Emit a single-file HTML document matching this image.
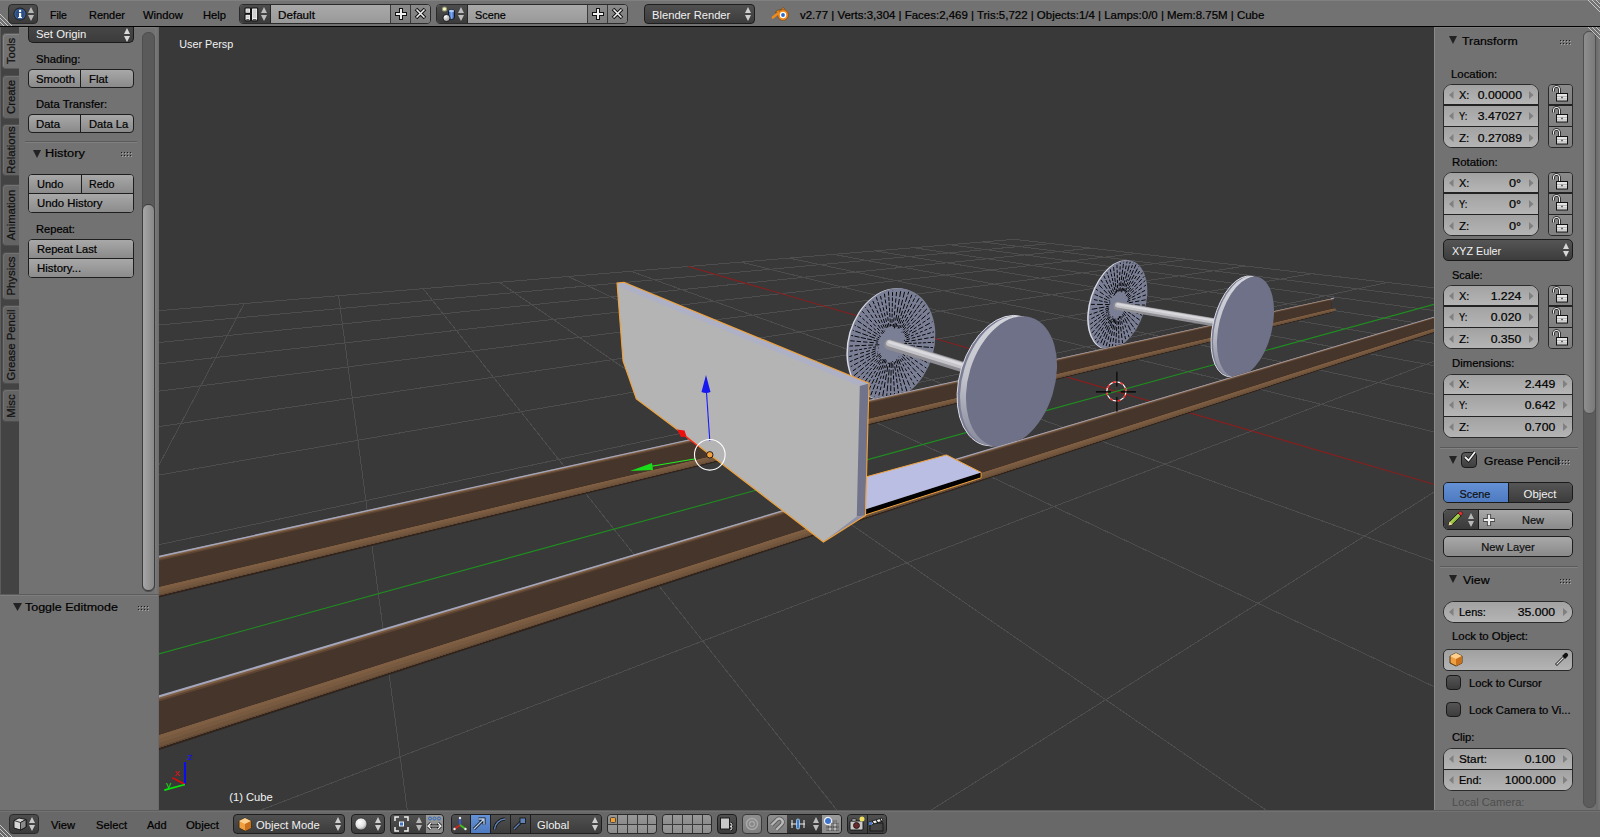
<!DOCTYPE html>
<html><head><meta charset="utf-8"><style>
html,body{margin:0;padding:0;width:1600px;height:837px;overflow:hidden;background:#393939;}
body{position:relative;font-family:"Liberation Sans", sans-serif;}
body>div,body>svg{position:absolute;}
</style></head><body>
<svg style="left:0;top:0;width:1600px;height:837px" viewBox="0 0 1600 837"><defs><linearGradient id="railband" x1="0" y1="0" x2="0" y2="1"><stop offset="0" stop-color="#7a5a3e"/><stop offset="1" stop-color="#7a5a3e"/></linearGradient><linearGradient id="rimgrad" x1="0" y1="0" x2="0" y2="1"><stop offset="0" stop-color="#d6d7de"/><stop offset="0.55" stop-color="#c4c5cc"/><stop offset="1" stop-color="#8a8c9e"/></linearGradient><clipPath id="vpclip"><rect x="159" y="27" width="1275" height="783"/></clipPath></defs><g clip-path="url(#vpclip)"><rect x="159" y="27" width="1275" height="783" fill="#393939"/><line x1="1014.3" y1="239.3" x2="154.0" y2="311.1" stroke="#4d4d4d" stroke-width="1.0" shape-rendering="crispEdges"/><line x1="1050.8" y1="243.6" x2="154.0" y2="325.5" stroke="#4d4d4d" stroke-width="1.0" shape-rendering="crispEdges"/><line x1="1091.4" y1="248.2" x2="154.0" y2="343.0" stroke="#4d4d4d" stroke-width="1.0" shape-rendering="crispEdges"/><line x1="1136.7" y1="253.5" x2="154.0" y2="364.5" stroke="#4d4d4d" stroke-width="1.0" shape-rendering="crispEdges"/><line x1="1187.6" y1="259.4" x2="154.0" y2="391.8" stroke="#4d4d4d" stroke-width="1.0" shape-rendering="crispEdges"/><line x1="1245.4" y1="266.1" x2="154.0" y2="427.4" stroke="#4d4d4d" stroke-width="1.0" shape-rendering="crispEdges"/><line x1="1311.3" y1="273.7" x2="154.0" y2="475.9" stroke="#4d4d4d" stroke-width="1.0" shape-rendering="crispEdges"/><line x1="1387.5" y1="282.5" x2="154.0" y2="545.8" stroke="#4d4d4d" stroke-width="1.0" shape-rendering="crispEdges"/><line x1="1439.0" y1="359.3" x2="247.9" y2="815.0" stroke="#4d4d4d" stroke-width="1.0" shape-rendering="crispEdges"/><line x1="1439.0" y1="488.9" x2="923.4" y2="815.0" stroke="#4d4d4d" stroke-width="1.0" shape-rendering="crispEdges"/><line x1="1014.3" y1="239.3" x2="1439.0" y2="288.4" stroke="#4d4d4d" stroke-width="1.0" shape-rendering="crispEdges"/><line x1="983.0" y1="242.0" x2="1439.0" y2="299.0" stroke="#4d4d4d" stroke-width="1.0" shape-rendering="crispEdges"/><line x1="949.6" y1="244.7" x2="1439.0" y2="311.3" stroke="#4d4d4d" stroke-width="1.0" shape-rendering="crispEdges"/><line x1="913.8" y1="247.7" x2="1439.0" y2="326.2" stroke="#4d4d4d" stroke-width="1.0" shape-rendering="crispEdges"/><line x1="875.3" y1="250.9" x2="1439.0" y2="344.2" stroke="#4d4d4d" stroke-width="1.0" shape-rendering="crispEdges"/><line x1="833.9" y1="254.4" x2="1439.0" y2="366.6" stroke="#4d4d4d" stroke-width="1.0" shape-rendering="crispEdges"/><line x1="789.2" y1="258.1" x2="1439.0" y2="395.3" stroke="#4d4d4d" stroke-width="1.0" shape-rendering="crispEdges"/><line x1="740.8" y1="262.1" x2="1439.0" y2="433.2" stroke="#4d4d4d" stroke-width="1.0" shape-rendering="crispEdges"/><line x1="631.0" y1="271.3" x2="1439.0" y2="563.1" stroke="#4d4d4d" stroke-width="1.0" shape-rendering="crispEdges"/><line x1="568.2" y1="276.5" x2="1439.0" y2="689.0" stroke="#4d4d4d" stroke-width="1.0" shape-rendering="crispEdges"/><line x1="499.3" y1="282.3" x2="1273.2" y2="815.0" stroke="#4d4d4d" stroke-width="1.0" shape-rendering="crispEdges"/><line x1="423.1" y1="288.6" x2="840.8" y2="815.0" stroke="#4d4d4d" stroke-width="1.0" shape-rendering="crispEdges"/><line x1="338.6" y1="295.7" x2="407.9" y2="815.0" stroke="#4d4d4d" stroke-width="1.0" shape-rendering="crispEdges"/><line x1="244.2" y1="303.5" x2="154.0" y2="474.5" stroke="#4d4d4d" stroke-width="1.0" shape-rendering="crispEdges"/><line x1="688.3" y1="266.5" x2="1439.0" y2="485.7" stroke="#8a1e1e" stroke-width="1.1" /><line x1="1439.0" y1="303.0" x2="154.0" y2="655.2" stroke="#1f8f1f" stroke-width="1.1" /><ellipse cx="890.1" cy="344.2" rx="42.5" ry="57" transform="rotate(16 890.1 344.2)" fill="#d8dae4"/><ellipse cx="891.6" cy="344.2" rx="42.5" ry="57" transform="rotate(16 891.6 344.2)" fill="#7b7f95"/><g transform="translate(891.6,344.2) rotate(16)"><line x1="12.5" y1="0.8" x2="41.2" y2="2.7" stroke="#000" stroke-width="0.85" stroke-dasharray="4.6 1.7" stroke-dashoffset="3.8"/><line x1="13.3" y1="2.7" x2="40.8" y2="8.1" stroke="#000" stroke-width="0.85" stroke-dasharray="3.2 1.3" stroke-dashoffset="3.8"/><line x1="12.2" y1="4.1" x2="40.0" y2="13.4" stroke="#000" stroke-width="0.85" stroke-dasharray="3.7 2.3" stroke-dashoffset="2.8"/><line x1="13.2" y1="6.3" x2="38.8" y2="18.6" stroke="#000" stroke-width="0.85" stroke-dasharray="4.4 1.9" stroke-dashoffset="1.0"/><line x1="12.2" y1="7.8" x2="37.3" y2="23.6" stroke="#000" stroke-width="0.85" stroke-dasharray="5.6 1.8" stroke-dashoffset="5.5"/><line x1="11.7" y1="9.4" x2="35.4" y2="28.4" stroke="#000" stroke-width="0.85" stroke-dasharray="3.2 2.1" stroke-dashoffset="3.1"/><line x1="10.2" y1="10.1" x2="33.1" y2="32.9" stroke="#000" stroke-width="0.85" stroke-dasharray="3.1 2.2" stroke-dashoffset="2.5"/><line x1="10.2" y1="12.4" x2="30.5" y2="37.1" stroke="#000" stroke-width="0.85" stroke-dasharray="5.6 2.0" stroke-dashoffset="7.0"/><line x1="8.7" y1="12.8" x2="27.7" y2="41.0" stroke="#000" stroke-width="0.85" stroke-dasharray="5.4 1.7" stroke-dashoffset="6.7"/><line x1="8.4" y1="15.2" x2="24.6" y2="44.4" stroke="#000" stroke-width="0.85" stroke-dasharray="3.3 1.4" stroke-dashoffset="1.0"/><line x1="7.4" y1="16.5" x2="21.2" y2="47.4" stroke="#000" stroke-width="0.85" stroke-dasharray="4.3 1.9" stroke-dashoffset="1.9"/><line x1="5.6" y1="16.0" x2="17.6" y2="50.0" stroke="#000" stroke-width="0.85" stroke-dasharray="4.2 1.7" stroke-dashoffset="3.4"/><line x1="4.5" y1="16.9" x2="13.9" y2="52.1" stroke="#000" stroke-width="0.85" stroke-dasharray="5.7 2.0" stroke-dashoffset="7.1"/><line x1="3.4" y1="18.3" x2="10.0" y2="53.6" stroke="#000" stroke-width="0.85" stroke-dasharray="6.0 2.0" stroke-dashoffset="1.3"/><line x1="2.1" y1="18.7" x2="6.0" y2="54.7" stroke="#000" stroke-width="0.85" stroke-dasharray="5.9 2.2" stroke-dashoffset="4.6"/><line x1="0.7" y1="18.4" x2="2.0" y2="55.2" stroke="#000" stroke-width="0.85" stroke-dasharray="3.6 2.1" stroke-dashoffset="3.3"/><line x1="-0.6" y1="16.9" x2="-2.0" y2="55.2" stroke="#000" stroke-width="0.85" stroke-dasharray="3.2 2.2" stroke-dashoffset="5.3"/><line x1="-1.8" y1="16.1" x2="-6.0" y2="54.7" stroke="#000" stroke-width="0.85" stroke-dasharray="5.4 1.7" stroke-dashoffset="1.1"/><line x1="-3.1" y1="16.5" x2="-10.0" y2="53.6" stroke="#000" stroke-width="0.85" stroke-dasharray="5.3 2.2" stroke-dashoffset="0.3"/><line x1="-4.5" y1="17.0" x2="-13.9" y2="52.1" stroke="#000" stroke-width="0.85" stroke-dasharray="3.1 2.0" stroke-dashoffset="1.7"/><line x1="-6.0" y1="17.2" x2="-17.6" y2="50.0" stroke="#000" stroke-width="0.85" stroke-dasharray="5.9 1.8" stroke-dashoffset="7.7"/><line x1="-6.5" y1="14.6" x2="-21.2" y2="47.4" stroke="#000" stroke-width="0.85" stroke-dasharray="3.2 1.9" stroke-dashoffset="0.2"/><line x1="-7.4" y1="13.4" x2="-24.6" y2="44.4" stroke="#000" stroke-width="0.85" stroke-dasharray="4.2 1.9" stroke-dashoffset="1.0"/><line x1="-8.1" y1="11.9" x2="-27.7" y2="41.0" stroke="#000" stroke-width="0.85" stroke-dasharray="5.6 1.6" stroke-dashoffset="6.9"/><line x1="-10.5" y1="12.8" x2="-30.5" y2="37.1" stroke="#000" stroke-width="0.85" stroke-dasharray="4.1 1.8" stroke-dashoffset="3.1"/><line x1="-10.9" y1="10.8" x2="-33.1" y2="32.9" stroke="#000" stroke-width="0.85" stroke-dasharray="4.8 1.9" stroke-dashoffset="4.1"/><line x1="-12.3" y1="9.9" x2="-35.4" y2="28.4" stroke="#000" stroke-width="0.85" stroke-dasharray="4.5 1.7" stroke-dashoffset="4.5"/><line x1="-11.3" y1="7.2" x2="-37.3" y2="23.6" stroke="#000" stroke-width="0.85" stroke-dasharray="3.9 2.3" stroke-dashoffset="3.2"/><line x1="-12.5" y1="6.0" x2="-38.8" y2="18.6" stroke="#000" stroke-width="0.85" stroke-dasharray="3.0 1.7" stroke-dashoffset="2.8"/><line x1="-11.6" y1="3.9" x2="-40.0" y2="13.4" stroke="#000" stroke-width="0.85" stroke-dasharray="4.8 1.9" stroke-dashoffset="0.4"/><line x1="-13.4" y1="2.7" x2="-40.8" y2="8.1" stroke="#000" stroke-width="0.85" stroke-dasharray="4.4 2.0" stroke-dashoffset="2.2"/><line x1="-13.7" y1="0.9" x2="-41.2" y2="2.7" stroke="#000" stroke-width="0.85" stroke-dasharray="5.2 1.3" stroke-dashoffset="0.4"/><line x1="-13.6" y1="-0.9" x2="-41.2" y2="-2.7" stroke="#000" stroke-width="0.85" stroke-dasharray="5.9 1.6" stroke-dashoffset="3.4"/><line x1="-13.3" y1="-2.6" x2="-40.8" y2="-8.1" stroke="#000" stroke-width="0.85" stroke-dasharray="4.0 1.7" stroke-dashoffset="1.8"/><line x1="-12.5" y1="-4.2" x2="-40.0" y2="-13.4" stroke="#000" stroke-width="0.85" stroke-dasharray="4.8 1.6" stroke-dashoffset="2.4"/><line x1="-13.1" y1="-6.3" x2="-38.8" y2="-18.6" stroke="#000" stroke-width="0.85" stroke-dasharray="3.1 1.9" stroke-dashoffset="3.6"/><line x1="-11.5" y1="-7.3" x2="-37.3" y2="-23.6" stroke="#000" stroke-width="0.85" stroke-dasharray="3.7 2.1" stroke-dashoffset="1.4"/><line x1="-10.6" y1="-8.5" x2="-35.4" y2="-28.4" stroke="#000" stroke-width="0.85" stroke-dasharray="4.3 2.0" stroke-dashoffset="0.6"/><line x1="-10.2" y1="-10.2" x2="-33.1" y2="-32.9" stroke="#000" stroke-width="0.85" stroke-dasharray="4.0 2.1" stroke-dashoffset="2.7"/><line x1="-10.4" y1="-12.7" x2="-30.5" y2="-37.1" stroke="#000" stroke-width="0.85" stroke-dasharray="3.5 1.6" stroke-dashoffset="3.3"/><line x1="-9.5" y1="-14.1" x2="-27.7" y2="-41.0" stroke="#000" stroke-width="0.85" stroke-dasharray="4.4 1.5" stroke-dashoffset="0.7"/><line x1="-7.9" y1="-14.3" x2="-24.6" y2="-44.4" stroke="#000" stroke-width="0.85" stroke-dasharray="3.6 2.1" stroke-dashoffset="4.8"/><line x1="-6.4" y1="-14.2" x2="-21.2" y2="-47.4" stroke="#000" stroke-width="0.85" stroke-dasharray="3.8 2.1" stroke-dashoffset="3.8"/><line x1="-6.0" y1="-16.9" x2="-17.6" y2="-50.0" stroke="#000" stroke-width="0.85" stroke-dasharray="4.0 1.4" stroke-dashoffset="1.6"/><line x1="-4.7" y1="-17.6" x2="-13.9" y2="-52.1" stroke="#000" stroke-width="0.85" stroke-dasharray="3.8 1.6" stroke-dashoffset="2.3"/><line x1="-3.2" y1="-16.9" x2="-10.0" y2="-53.6" stroke="#000" stroke-width="0.85" stroke-dasharray="4.2 2.2" stroke-dashoffset="1.0"/><line x1="-1.7" y1="-15.8" x2="-6.0" y2="-54.7" stroke="#000" stroke-width="0.85" stroke-dasharray="5.8 2.2" stroke-dashoffset="7.9"/><line x1="-0.6" y1="-17.4" x2="-2.0" y2="-55.2" stroke="#000" stroke-width="0.85" stroke-dasharray="5.9 2.2" stroke-dashoffset="1.8"/><line x1="0.7" y1="-18.5" x2="2.0" y2="-55.2" stroke="#000" stroke-width="0.85" stroke-dasharray="5.5 2.0" stroke-dashoffset="3.9"/><line x1="1.9" y1="-16.8" x2="6.0" y2="-54.7" stroke="#000" stroke-width="0.85" stroke-dasharray="4.0 1.5" stroke-dashoffset="0.4"/><line x1="3.3" y1="-17.4" x2="10.0" y2="-53.6" stroke="#000" stroke-width="0.85" stroke-dasharray="3.9 2.1" stroke-dashoffset="0.3"/><line x1="4.8" y1="-17.9" x2="13.9" y2="-52.1" stroke="#000" stroke-width="0.85" stroke-dasharray="5.1 2.2" stroke-dashoffset="6.5"/><line x1="6.1" y1="-17.2" x2="17.6" y2="-50.0" stroke="#000" stroke-width="0.85" stroke-dasharray="4.7 1.3" stroke-dashoffset="4.5"/><line x1="6.3" y1="-14.2" x2="21.2" y2="-47.4" stroke="#000" stroke-width="0.85" stroke-dasharray="3.9 2.0" stroke-dashoffset="3.1"/><line x1="7.7" y1="-14.0" x2="24.6" y2="-44.4" stroke="#000" stroke-width="0.85" stroke-dasharray="5.8 1.9" stroke-dashoffset="2.6"/><line x1="8.4" y1="-12.5" x2="27.7" y2="-41.0" stroke="#000" stroke-width="0.85" stroke-dasharray="5.6 1.8" stroke-dashoffset="5.8"/><line x1="9.5" y1="-11.5" x2="30.5" y2="-37.1" stroke="#000" stroke-width="0.85" stroke-dasharray="3.6 1.8" stroke-dashoffset="4.4"/><line x1="9.9" y1="-9.9" x2="33.1" y2="-32.9" stroke="#000" stroke-width="0.85" stroke-dasharray="5.4 2.2" stroke-dashoffset="6.1"/><line x1="12.0" y1="-9.7" x2="35.4" y2="-28.4" stroke="#000" stroke-width="0.85" stroke-dasharray="3.0 1.9" stroke-dashoffset="4.3"/><line x1="10.9" y1="-6.9" x2="37.3" y2="-23.6" stroke="#000" stroke-width="0.85" stroke-dasharray="3.8 1.6" stroke-dashoffset="2.8"/><line x1="12.2" y1="-5.9" x2="38.8" y2="-18.6" stroke="#000" stroke-width="0.85" stroke-dasharray="4.4 2.1" stroke-dashoffset="0.0"/><line x1="11.7" y1="-3.9" x2="40.0" y2="-13.4" stroke="#000" stroke-width="0.85" stroke-dasharray="3.4 1.4" stroke-dashoffset="0.3"/><line x1="14.2" y1="-2.8" x2="40.8" y2="-8.1" stroke="#000" stroke-width="0.85" stroke-dasharray="5.6 1.4" stroke-dashoffset="3.5"/><line x1="12.7" y1="-0.8" x2="41.2" y2="-2.7" stroke="#000" stroke-width="0.85" stroke-dasharray="3.9 1.7" stroke-dashoffset="3.6"/></g><ellipse cx="891.6" cy="344.2" rx="10.2" ry="13.68" transform="rotate(16 891.6 344.2)" fill="#7b7f95"/><ellipse cx="1116.5" cy="304.7" rx="27" ry="46" transform="rotate(18 1116.5 304.7)" fill="#d8dae4"/><ellipse cx="1118" cy="304.7" rx="27" ry="46" transform="rotate(18 1118 304.7)" fill="#7b7f95"/><g transform="translate(1118,304.7) rotate(18)"><line x1="8.1" y1="0.8" x2="26.1" y2="2.7" stroke="#000" stroke-width="0.85" stroke-dasharray="3.5 2.0" stroke-dashoffset="0.4"/><line x1="8.3" y1="2.6" x2="25.8" y2="8.0" stroke="#000" stroke-width="0.85" stroke-dasharray="4.1 1.4" stroke-dashoffset="2.8"/><line x1="7.3" y1="3.9" x2="25.0" y2="13.3" stroke="#000" stroke-width="0.85" stroke-dasharray="4.3 1.4" stroke-dashoffset="0.5"/><line x1="7.5" y1="5.8" x2="23.9" y2="18.3" stroke="#000" stroke-width="0.85" stroke-dasharray="5.5 1.4" stroke-dashoffset="1.5"/><line x1="7.3" y1="7.6" x2="22.4" y2="23.1" stroke="#000" stroke-width="0.85" stroke-dasharray="5.8 1.9" stroke-dashoffset="3.1"/><line x1="7.2" y1="9.6" x2="20.6" y2="27.5" stroke="#000" stroke-width="0.85" stroke-dasharray="3.1 2.2" stroke-dashoffset="1.5"/><line x1="5.5" y1="9.4" x2="18.5" y2="31.6" stroke="#000" stroke-width="0.85" stroke-dasharray="3.4 1.6" stroke-dashoffset="4.0"/><line x1="4.8" y1="10.5" x2="16.2" y2="35.1" stroke="#000" stroke-width="0.85" stroke-dasharray="4.7 1.9" stroke-dashoffset="2.5"/><line x1="4.4" y1="12.3" x2="13.5" y2="38.2" stroke="#000" stroke-width="0.85" stroke-dasharray="3.2 1.4" stroke-dashoffset="0.9"/><line x1="3.6" y1="13.5" x2="10.7" y2="40.7" stroke="#000" stroke-width="0.85" stroke-dasharray="4.3 1.6" stroke-dashoffset="3.5"/><line x1="2.5" y1="13.5" x2="7.8" y2="42.6" stroke="#000" stroke-width="0.85" stroke-dasharray="3.9 2.1" stroke-dashoffset="4.2"/><line x1="1.4" y1="13.3" x2="4.7" y2="43.9" stroke="#000" stroke-width="0.85" stroke-dasharray="4.7 1.8" stroke-dashoffset="5.7"/><line x1="0.5" y1="14.9" x2="1.6" y2="44.5" stroke="#000" stroke-width="0.85" stroke-dasharray="3.9 2.3" stroke-dashoffset="0.7"/><line x1="-0.5" y1="14.0" x2="-1.6" y2="44.5" stroke="#000" stroke-width="0.85" stroke-dasharray="5.3 1.5" stroke-dashoffset="3.3"/><line x1="-1.4" y1="12.8" x2="-4.7" y2="43.9" stroke="#000" stroke-width="0.85" stroke-dasharray="5.0 2.1" stroke-dashoffset="4.1"/><line x1="-2.7" y1="14.6" x2="-7.8" y2="42.6" stroke="#000" stroke-width="0.85" stroke-dasharray="3.9 2.0" stroke-dashoffset="3.5"/><line x1="-3.5" y1="13.2" x2="-10.7" y2="40.7" stroke="#000" stroke-width="0.85" stroke-dasharray="4.4 2.1" stroke-dashoffset="6.1"/><line x1="-4.3" y1="12.1" x2="-13.5" y2="38.2" stroke="#000" stroke-width="0.85" stroke-dasharray="5.0 1.4" stroke-dashoffset="4.5"/><line x1="-5.3" y1="11.5" x2="-16.2" y2="35.1" stroke="#000" stroke-width="0.85" stroke-dasharray="6.0 2.1" stroke-dashoffset="2.3"/><line x1="-5.8" y1="9.9" x2="-18.5" y2="31.6" stroke="#000" stroke-width="0.85" stroke-dasharray="5.0 1.3" stroke-dashoffset="2.9"/><line x1="-6.2" y1="8.2" x2="-20.6" y2="27.5" stroke="#000" stroke-width="0.85" stroke-dasharray="3.4 1.4" stroke-dashoffset="3.6"/><line x1="-6.6" y1="6.8" x2="-22.4" y2="23.1" stroke="#000" stroke-width="0.85" stroke-dasharray="3.7 1.7" stroke-dashoffset="4.7"/><line x1="-7.0" y1="5.4" x2="-23.9" y2="18.3" stroke="#000" stroke-width="0.85" stroke-dasharray="4.3 1.8" stroke-dashoffset="5.5"/><line x1="-8.5" y1="4.5" x2="-25.0" y2="13.3" stroke="#000" stroke-width="0.85" stroke-dasharray="5.6 1.6" stroke-dashoffset="3.0"/><line x1="-8.0" y1="2.5" x2="-25.8" y2="8.0" stroke="#000" stroke-width="0.85" stroke-dasharray="5.7 2.3" stroke-dashoffset="1.2"/><line x1="-7.8" y1="0.8" x2="-26.1" y2="2.7" stroke="#000" stroke-width="0.85" stroke-dasharray="3.7 1.5" stroke-dashoffset="2.5"/><line x1="-8.5" y1="-0.9" x2="-26.1" y2="-2.7" stroke="#000" stroke-width="0.85" stroke-dasharray="3.8 1.3" stroke-dashoffset="2.1"/><line x1="-8.0" y1="-2.5" x2="-25.8" y2="-8.0" stroke="#000" stroke-width="0.85" stroke-dasharray="4.7 2.3" stroke-dashoffset="4.8"/><line x1="-8.0" y1="-4.3" x2="-25.0" y2="-13.3" stroke="#000" stroke-width="0.85" stroke-dasharray="4.9 2.0" stroke-dashoffset="0.4"/><line x1="-8.2" y1="-6.3" x2="-23.9" y2="-18.3" stroke="#000" stroke-width="0.85" stroke-dasharray="5.3 2.2" stroke-dashoffset="6.0"/><line x1="-7.0" y1="-7.2" x2="-22.4" y2="-23.1" stroke="#000" stroke-width="0.85" stroke-dasharray="4.2 1.4" stroke-dashoffset="3.6"/><line x1="-6.0" y1="-8.0" x2="-20.6" y2="-27.5" stroke="#000" stroke-width="0.85" stroke-dasharray="3.2 1.5" stroke-dashoffset="0.8"/><line x1="-5.7" y1="-9.8" x2="-18.5" y2="-31.6" stroke="#000" stroke-width="0.85" stroke-dasharray="3.2 1.3" stroke-dashoffset="0.7"/><line x1="-4.8" y1="-10.4" x2="-16.2" y2="-35.1" stroke="#000" stroke-width="0.85" stroke-dasharray="4.1 1.3" stroke-dashoffset="4.7"/><line x1="-4.4" y1="-12.5" x2="-13.5" y2="-38.2" stroke="#000" stroke-width="0.85" stroke-dasharray="3.4 1.6" stroke-dashoffset="1.7"/><line x1="-3.3" y1="-12.7" x2="-10.7" y2="-40.7" stroke="#000" stroke-width="0.85" stroke-dasharray="3.4 2.1" stroke-dashoffset="5.5"/><line x1="-2.5" y1="-13.5" x2="-7.8" y2="-42.6" stroke="#000" stroke-width="0.85" stroke-dasharray="4.5 1.4" stroke-dashoffset="0.6"/><line x1="-1.5" y1="-13.6" x2="-4.7" y2="-43.9" stroke="#000" stroke-width="0.85" stroke-dasharray="3.8 2.1" stroke-dashoffset="1.0"/><line x1="-0.5" y1="-12.9" x2="-1.6" y2="-44.5" stroke="#000" stroke-width="0.85" stroke-dasharray="5.9 1.8" stroke-dashoffset="1.1"/><line x1="0.5" y1="-14.4" x2="1.6" y2="-44.5" stroke="#000" stroke-width="0.85" stroke-dasharray="3.1 1.8" stroke-dashoffset="4.8"/><line x1="1.6" y1="-15.0" x2="4.7" y2="-43.9" stroke="#000" stroke-width="0.85" stroke-dasharray="5.1 1.6" stroke-dashoffset="2.4"/><line x1="2.3" y1="-12.7" x2="7.8" y2="-42.6" stroke="#000" stroke-width="0.85" stroke-dasharray="5.3 1.8" stroke-dashoffset="5.6"/><line x1="3.3" y1="-12.6" x2="10.7" y2="-40.7" stroke="#000" stroke-width="0.85" stroke-dasharray="3.7 2.1" stroke-dashoffset="5.7"/><line x1="4.6" y1="-13.0" x2="13.5" y2="-38.2" stroke="#000" stroke-width="0.85" stroke-dasharray="5.4 2.1" stroke-dashoffset="5.6"/><line x1="4.9" y1="-10.6" x2="16.2" y2="-35.1" stroke="#000" stroke-width="0.85" stroke-dasharray="4.6 1.7" stroke-dashoffset="0.2"/><line x1="5.4" y1="-9.2" x2="18.5" y2="-31.6" stroke="#000" stroke-width="0.85" stroke-dasharray="3.8 1.6" stroke-dashoffset="3.7"/><line x1="7.2" y1="-9.6" x2="20.6" y2="-27.5" stroke="#000" stroke-width="0.85" stroke-dasharray="4.3 2.2" stroke-dashoffset="6.5"/><line x1="7.8" y1="-8.0" x2="22.4" y2="-23.1" stroke="#000" stroke-width="0.85" stroke-dasharray="4.1 1.5" stroke-dashoffset="1.3"/><line x1="7.2" y1="-5.5" x2="23.9" y2="-18.3" stroke="#000" stroke-width="0.85" stroke-dasharray="3.6 1.9" stroke-dashoffset="5.0"/><line x1="8.5" y1="-4.5" x2="25.0" y2="-13.3" stroke="#000" stroke-width="0.85" stroke-dasharray="4.4 2.0" stroke-dashoffset="5.1"/><line x1="7.6" y1="-2.4" x2="25.8" y2="-8.0" stroke="#000" stroke-width="0.85" stroke-dasharray="5.0 2.2" stroke-dashoffset="5.6"/><line x1="8.8" y1="-0.9" x2="26.1" y2="-2.7" stroke="#000" stroke-width="0.85" stroke-dasharray="4.4 1.5" stroke-dashoffset="4.7"/></g><ellipse cx="1118" cy="304.7" rx="6.4799999999999995" ry="11.04" transform="rotate(18 1118 304.7)" fill="#7b7f95"/><polygon points="158.0,556.2 1331.5,298.5 1331.5,312.8 158.0,597.8" fill="#2f231b" /><polygon points="158.0,587.1 1331.5,308.8 1331.5,311.8 158.0,595.7" fill="#7f5f43" /><polygon points="158.0,589.9 1331.5,309.8 1331.5,311.8 158.0,595.7" fill="#785a40" /><polygon points="158.0,592.6 1331.5,310.7 1331.5,311.8 158.0,595.7" fill="#70543c" /><polygon points="158.0,595.1 1331.5,311.6 1331.5,311.8 158.0,595.7" fill="#5c4533" /><polygon points="158.0,556.2 1331.5,298.5 1331.5,308.8 158.0,587.1" fill="#46352a" /><polygon points="158.0,556.2 1331.5,298.5 1331.5,300.1 158.0,560.9" fill="#5e4533" /><polygon points="158.0,556.2 1331.5,298.5 1331.5,299.5 158.0,559.2" fill="#7e5f43" /><polygon points="158.0,555.9 1331.5,298.4 1331.5,299.0 158.0,557.6" fill="#a3a6bc" /><polygon points="1331.0,298.6 1334.4,297.9 1333.2,300.1 1331.0,301.0" fill="#5e4533" /><polygon points="1331.0,298.3 1334.4,297.6 1333.8,298.8 1331.0,299.5" fill="#a3a6bc" /><polygon points="1331.0,308.9 1335.8,308.4 1335.8,310.5 1331.0,311.7" fill="#7b5b3d" /><line x1="889.4" y1="344.5" x2="966" y2="368.1" stroke="#8e8e94" stroke-width="10.5" stroke-linecap="round"/><line x1="889.4" y1="343.24" x2="966" y2="366.84000000000003" stroke="#c4c4c8" stroke-width="6.51" stroke-linecap="round"/><line x1="889.4" y1="342.19" x2="966" y2="365.79" stroke="#dadade" stroke-width="2.625" stroke-linecap="round"/><line x1="1117.6" y1="306" x2="1217" y2="322.7" stroke="#8e8e94" stroke-width="8.2" stroke-linecap="round"/><line x1="1117.6" y1="305.016" x2="1217" y2="321.716" stroke="#c4c4c8" stroke-width="5.084" stroke-linecap="round"/><line x1="1117.6" y1="304.196" x2="1217" y2="320.896" stroke="#dadade" stroke-width="2.05" stroke-linecap="round"/><ellipse cx="1002.6" cy="380.7" rx="43" ry="67" transform="rotate(17 1002.6 380.7)" fill="#7a7d94" stroke="#dcdde6" stroke-width="0.9"/><ellipse cx="1005.6" cy="381.0" rx="43" ry="67" transform="rotate(17 1005.6 381.0)" fill="url(#rimgrad)"/><ellipse cx="1011.5" cy="381.6" rx="43" ry="67" transform="rotate(17 1011.5 381.6)" fill="#6e7187"/><ellipse cx="1239.6" cy="326.4" rx="26.5" ry="51.5" transform="rotate(14 1239.6 326.4)" fill="#7a7d94" stroke="#dcdde6" stroke-width="0.9"/><ellipse cx="1241.6" cy="326.6" rx="26.5" ry="51.5" transform="rotate(14 1241.6 326.6)" fill="url(#rimgrad)"/><ellipse cx="1245.5" cy="327" rx="26.5" ry="51.5" transform="rotate(14 1245.5 327)" fill="#6e7187"/><polygon points="158.0,696.0 1435.0,316.6 1435.0,332.6 158.0,750.4" fill="#2f231b" /><polygon points="158.0,735.1 1435.0,328.0 1435.0,331.5 158.0,748.0" fill="#7f5f43" /><polygon points="158.0,739.2 1435.0,329.1 1435.0,331.5 158.0,748.0" fill="#785a40" /><polygon points="158.0,743.3 1435.0,330.3 1435.0,331.5 158.0,748.0" fill="#70543c" /><polygon points="158.0,747.2 1435.0,331.3 1435.0,331.5 158.0,748.0" fill="#5c4533" /><polygon points="158.0,696.0 1435.0,316.6 1435.0,328.0 158.0,735.1" fill="#46352a" /><polygon points="158.0,696.0 1435.0,316.6 1435.0,318.3 158.0,701.9" fill="#5e4533" /><polygon points="158.0,696.0 1435.0,316.6 1435.0,317.7 158.0,699.7" fill="#7e5f43" /><polygon points="158.0,695.6 1435.0,316.5 1435.0,317.1 158.0,697.8" fill="#a3a6bc" /><polygon points="865.0,509.4 981.1,472.4 981.1,477.8 865.0,515.0" fill="#000" /><polygon points="865.2,477.1 946.5,454.9 981.1,472.4 865.0,509.4" fill="#b9bee2" /><polyline points="865.2,477.1 946.5,454.9 981.1,472.4 981.1,477.8 865,515" fill="none" stroke="#f2a23a" stroke-width="1"/><polygon points="617.0,283.0 624.0,282.5 868.9,383.5 865.0,515.4 823.4,541.7 676.5,428.7 636.3,399.0 623.0,360.8" fill="#b4b4b4" /><polygon points="617.5,283.0 624.0,282.5 868.9,383.5 859.8,386.0 621.0,287.5" fill="#aeb0c6" /><polygon points="859.8,386.0 868.9,383.5 865.0,515.4 856.8,516.6" fill="#707389" /><polygon points="856.8,516.6 865.0,515.4 823.4,541.7" fill="#8d91aa" /><polyline points="869,383 865.5,515.4 823.4,542 676.5,429 636.3,399 623,360.8 617,283 624,282.3 868.9,383.3" fill="none" stroke="#f2a23a" stroke-width="1.1"/><line x1="709.8" y1="440.8" x2="706.2" y2="388" stroke="#1a1aff" stroke-width="1.1"/><path d="M706 375 L710.5 392 Q706 394 701.5 392Z" fill="#1818f0"/><line x1="698.8" y1="446.8" x2="684" y2="435" stroke="#ff2020" stroke-width="1.1"/><path d="M677 429.5 L684.5 430.5 L686.5 436.5 L681 437 Z" fill="#ee0f0f"/><line x1="695.8" y1="458.8" x2="650" y2="466.5" stroke="#22ee22" stroke-width="1.1"/><path d="M630 471 L652 463 L653 470Z" fill="#18dd18"/><circle cx="709.8" cy="454.8" r="15.3" fill="none" stroke="#ffffff" stroke-width="1.1"/><circle cx="709.8" cy="454.8" r="3.2" fill="#f4a040" stroke="#111" stroke-width="0.9"/><circle cx="1116.4" cy="391.4" r="9.6" fill="none" stroke="#ffffff" stroke-width="1.2"/><circle cx="1116.4" cy="391.4" r="9.6" fill="none" stroke="#ff1a1a" stroke-width="1.2" stroke-dasharray="3.77 3.77" transform="rotate(20 1116.4 391.4)"/><path d="M1095.9 391.9 H1110.9 M1120.9 391.9 H1135.9 M1116.9 371.7 V386.5 M1116.9 397.0 V411.79999999999995" stroke="#000" stroke-width="1.1"/><line x1="185" y1="784.5" x2="185" y2="762" stroke="#0a0aff" stroke-width="1.9"/><line x1="185" y1="784.5" x2="172.3" y2="777.6" stroke="#e80808" stroke-width="1.6"/><line x1="185" y1="784.5" x2="164.3" y2="790.1" stroke="#08e808" stroke-width="1.8"/><text x="187.2" y="759.8" font-size="9" fill="#1010ff" font-family="Liberation Sans" textLength="5.2" lengthAdjust="spacingAndGlyphs">z</text><text x="174.6" y="776.3" font-size="9" fill="#e01010" font-family="Liberation Sans" textLength="5.2" lengthAdjust="spacingAndGlyphs">x</text><text x="166" y="788" font-size="9" fill="#10e010" font-family="Liberation Sans" textLength="5.4" lengthAdjust="spacingAndGlyphs">y</text><text x="179.2" y="48" font-size="10.5" fill="#f2f2f2" font-family="Liberation Sans" textLength="54.0" lengthAdjust="spacingAndGlyphs">User Persp</text><text x="229.2" y="801.3" font-size="10.5" fill="#f2f2f2" font-family="Liberation Sans" textLength="43.6" lengthAdjust="spacingAndGlyphs">(1) Cube</text></g></svg><div style="left:0px;top:0px;width:1600px;height:26px;background:#727272;"></div><div style="left:0px;top:0px;width:1600px;height:1px;background:#808080;"></div><div style="left:0px;top:26px;width:1600px;height:1px;background:#000;"></div><svg style="left:0px;top:12px;width:14px;height:14px;overflow:visible" viewBox="0 0 14 14"><path d="M0 2 L12 14 M0 6 L8 14 M0 10 L4 14" stroke="#c8c8c8" stroke-width="1"/></svg><div style="left:8px;top:4px;width:30px;height:20px;box-sizing:border-box;border:1px solid #2a2a2a;border-radius:4px;background:linear-gradient(#4d4d4d,#3a3a3a);"></div><svg style="left:13px;top:7px;width:14px;height:14px;overflow:visible" viewBox="0 0 14 14"><circle cx="7" cy="7" r="6.5" fill="#1e1e1e"/><circle cx="7" cy="7" r="5.6" fill="#3f65a0"/><circle cx="7" cy="7" r="4.6" fill="#2c4f86"/><rect x="6" y="6" width="2.2" height="4.5" fill="#fff"/><circle cx="7.1" cy="4" r="1.2" fill="#fff"/><rect x="5.2" y="10" width="3.8" height="1" fill="#fff"/></svg><svg style="left:27px;top:6px;width:8px;height:16px" viewBox="0 0 8 16"><path d="M1 7 L4 1 L7 7Z M1 9 L4 15 L7 9Z" fill="#b8b8b8"/></svg><div style="left:50.00px;transform-origin:left;top:9.81px;font-size:10.5px;line-height:10.5px;color:#000;white-space:nowrap;transform:scaleX(0.9990);-webkit-text-stroke:0.2px #000;">File</div><div style="left:88.50px;transform-origin:left;top:9.81px;font-size:10.5px;line-height:10.5px;color:#000;white-space:nowrap;transform:scaleX(1.0444);-webkit-text-stroke:0.2px #000;">Render</div><div style="left:143.00px;transform-origin:left;top:9.81px;font-size:10.5px;line-height:10.5px;color:#000;white-space:nowrap;transform:scaleX(1.0665);-webkit-text-stroke:0.2px #000;">Window</div><div style="left:203.00px;transform-origin:left;top:9.81px;font-size:10.5px;line-height:10.5px;color:#000;white-space:nowrap;transform:scaleX(1.0665);-webkit-text-stroke:0.2px #000;">Help</div><div style="left:239px;top:4px;width:192px;height:20px;box-sizing:border-box;border:1px solid #2a2a2a;border-radius:4px;background:linear-gradient(#a9a9a9,#999999);"></div><div style="left:240px;top:5px;width:31px;height:18px;border-radius:3px 0 0 3px;background:linear-gradient(#4d4d4d,#3a3a3a)"></div><div style="left:270px;top:5px;width:1px;height:18px;background:#262626;"></div><div style="left:390px;top:5px;width:1px;height:18px;background:#3a3a3a;"></div><div style="left:410px;top:5px;width:1px;height:18px;background:#3a3a3a;"></div><div style="left:391px;top:5px;width:39px;height:18px;border-radius:0 3px 3px 0;background:linear-gradient(#8a8a8a,#7c7c7c)"></div><div style="left:410px;top:5px;width:1px;height:18px;background:#3a3a3a;"></div><svg style="left:244px;top:7px;width:15px;height:15px;overflow:visible" viewBox="0 0 15 15"><rect x="1" y="1" width="5.6" height="5.4" rx="0.8" fill="#f4f4f4" stroke="#111" stroke-width="1.1"/><rect x="1" y="7.3" width="5.6" height="6.6" rx="0.8" fill="#f4f4f4" stroke="#111" stroke-width="1.1"/><rect x="7.5" y="1" width="6.2" height="12.9" rx="0.8" fill="#f4f4f4" stroke="#111" stroke-width="1.1"/><rect x="2.3" y="2.3" width="3" height="2.8" fill="#d0d0d0"/><rect x="2.3" y="8.6" width="3" height="2.6" fill="#d0d0d0"/><rect x="8.8" y="2.3" width="3.6" height="8.8" fill="#d0d0d0"/><rect x="2.3" y="12" width="3" height="0.9" fill="#444"/><rect x="8.8" y="12" width="3.6" height="0.9" fill="#444"/></svg><svg style="left:260px;top:6px;width:8px;height:16px" viewBox="0 0 8 16"><path d="M1 7 L4 1 L7 7Z M1 9 L4 15 L7 9Z" fill="#bdbdbd"/></svg><div style="left:278.00px;transform-origin:left;top:9.81px;font-size:10.5px;line-height:10.5px;color:#000;white-space:nowrap;transform:scaleX(1.1094);-webkit-text-stroke:0.2px #000;">Default</div><svg style="left:394px;top:7px;width:14px;height:14px;overflow:visible" viewBox="0 0 14 14"><path d="M7 1 V13 M1 7 H13" stroke="#111" stroke-width="4"/><path d="M7 2 V12 M2 7 H12" stroke="#f0f0f0" stroke-width="2"/></svg><svg style="left:414px;top:7px;width:13px;height:13px;overflow:visible" viewBox="0 0 13 13"><path d="M2 2 L11 11 M11 2 L2 11" stroke="#111" stroke-width="3.6"/><path d="M2.5 2.5 L10.5 10.5 M10.5 2.5 L2.5 10.5" stroke="#f0f0f0" stroke-width="1.6"/></svg><div style="left:436px;top:4px;width:192px;height:20px;box-sizing:border-box;border:1px solid #2a2a2a;border-radius:4px;background:linear-gradient(#a9a9a9,#999999);"></div><div style="left:437px;top:5px;width:31px;height:18px;border-radius:3px 0 0 3px;background:linear-gradient(#4d4d4d,#3a3a3a)"></div><div style="left:467px;top:5px;width:1px;height:18px;background:#262626;"></div><div style="left:587px;top:5px;width:1px;height:18px;background:#3a3a3a;"></div><div style="left:588px;top:5px;width:39px;height:18px;border-radius:0 3px 3px 0;background:linear-gradient(#8a8a8a,#7c7c7c)"></div><div style="left:607px;top:5px;width:1px;height:18px;background:#3a3a3a;"></div><svg style="left:441px;top:6px;width:16px;height:17px;overflow:visible" viewBox="0 0 16 17"><defs><radialGradient id="sc1" cx="0.35" cy="0.3" r="0.8"><stop offset="0" stop-color="#fff"/><stop offset="1" stop-color="#8a8a8a"/></radialGradient><linearGradient id="sc2" x1="0" y1="0" x2="1" y2="0"><stop offset="0" stop-color="#2a5ab8"/><stop offset="0.5" stop-color="#7aa8f0"/><stop offset="1" stop-color="#2a4a90"/></linearGradient></defs><circle cx="3.5" cy="3" r="2.6" fill="#f0f0a0" opacity="0.5"/><circle cx="3.5" cy="3" r="1.6" fill="#f8f8c0"/><rect x="7.5" y="3.5" width="6" height="10" rx="2.6" fill="url(#sc2)" stroke="#111" stroke-width="0.9"/><ellipse cx="10.5" cy="5" rx="2.6" ry="1.3" fill="#a8c8f8"/><circle cx="5.5" cy="12" r="3.6" fill="url(#sc1)" stroke="#111" stroke-width="0.9"/></svg><svg style="left:457px;top:6px;width:8px;height:16px" viewBox="0 0 8 16"><path d="M1 7 L4 1 L7 7Z M1 9 L4 15 L7 9Z" fill="#bdbdbd"/></svg><div style="left:475.00px;transform-origin:left;top:9.81px;font-size:10.5px;line-height:10.5px;color:#000;white-space:nowrap;transform:scaleX(1.0345);-webkit-text-stroke:0.2px #000;">Scene</div><svg style="left:591px;top:7px;width:14px;height:14px;overflow:visible" viewBox="0 0 14 14"><path d="M7 1 V13 M1 7 H13" stroke="#111" stroke-width="4"/><path d="M7 2 V12 M2 7 H12" stroke="#f0f0f0" stroke-width="2"/></svg><svg style="left:611px;top:7px;width:13px;height:13px;overflow:visible" viewBox="0 0 13 13"><path d="M2 2 L11 11 M11 2 L2 11" stroke="#111" stroke-width="3.6"/><path d="M2.5 2.5 L10.5 10.5 M10.5 2.5 L2.5 10.5" stroke="#f0f0f0" stroke-width="1.6"/></svg><div style="left:644px;top:4px;width:111px;height:20px;box-sizing:border-box;border:1px solid #1e1e1e;border-radius:4px;background:linear-gradient(#505050,#3c3c3c);"></div><div style="left:652.00px;transform-origin:left;top:9.81px;font-size:10.5px;line-height:10.5px;color:#f0f0f0;white-space:nowrap;transform:scaleX(1.0648);">Blender Render</div><svg style="left:744px;top:6px;width:8px;height:16px" viewBox="0 0 8 16"><path d="M1 7 L4 1 L7 7Z M1 9 L4 15 L7 9Z" fill="#cfcfcf"/></svg><svg style="left:772px;top:6px;width:18px;height:15px;overflow:visible" viewBox="0 0 18 15"><path d="M1 11 L7 6.5 L3 6.5 L6 4 L9 4 L11 1.5 L13 3 " fill="#f08a1c" stroke="#6a3a08" stroke-width="0.6"/><circle cx="11" cy="9" r="5.4" fill="#f08a1c" stroke="#7a4008" stroke-width="0.6"/><circle cx="11" cy="9" r="3.2" fill="#ffffff"/><circle cx="11" cy="9" r="1.9" fill="#2f6ac0"/><path d="M0.8 11.5 L6.5 7" stroke="#f08a1c" stroke-width="2.4" stroke-linecap="round"/></svg><div style="left:799.50px;transform-origin:left;top:9.81px;font-size:10.5px;line-height:10.5px;color:#000;white-space:nowrap;transform:scaleX(1.0918);-webkit-text-stroke:0.2px #000;">v2.77 | Verts:3,304 | Faces:2,469 | Tris:5,722 | Objects:1/4 | Lamps:0/0 | Mem:8.75M | Cube</div><svg style="left:1586px;top:0px;width:14px;height:14px;overflow:visible" viewBox="0 0 14 14"><path d="M2 0 L14 12 M6 0 L14 8 M10 0 L14 4" stroke="#c8c8c8" stroke-width="1"/></svg><div style="left:0px;top:27px;width:159px;height:568px;background:#727272;"></div><div style="left:0px;top:27px;width:159px;height:1px;background:#7c7c7c;"></div><div style="left:0px;top:27px;width:19px;height:568px;background:#434343;"></div><div style="left:0px;top:27px;width:1px;height:568px;background:#5c5c5c;"></div><div style="left:2px;top:33px;width:17px;height:36px;box-sizing:border-box;border-radius:4px 0 0 4px;background:#737373;border:1px solid #5a5a5a;border-right:none;box-shadow:inset 1px 1px 0 #858585"></div><div style="left:-49px;top:45.0px;width:120px;height:12px;line-height:12px;text-align:center;font-size:10.5px;color:#101010;transform:rotate(-90deg) scaleX(1.08);white-space:nowrap;-webkit-text-stroke:0.2px #101010">Tools</div><div style="left:2px;top:75px;width:17px;height:44px;box-sizing:border-box;border-radius:4px 0 0 4px;background:#646464;border:1px solid #4e4e4e;border-right:none;box-shadow:inset 1px 1px 0 #727272"></div><div style="left:-49px;top:91.0px;width:120px;height:12px;line-height:12px;text-align:center;font-size:10.5px;color:#101010;transform:rotate(-90deg) scaleX(1.08);white-space:nowrap;-webkit-text-stroke:0.2px #101010">Create</div><div style="left:2px;top:124px;width:17px;height:52px;box-sizing:border-box;border-radius:4px 0 0 4px;background:#646464;border:1px solid #4e4e4e;border-right:none;box-shadow:inset 1px 1px 0 #727272"></div><div style="left:-49px;top:144.0px;width:120px;height:12px;line-height:12px;text-align:center;font-size:10.5px;color:#101010;transform:rotate(-90deg) scaleX(1.08);white-space:nowrap;-webkit-text-stroke:0.2px #101010">Relations</div><div style="left:2px;top:184px;width:17px;height:62px;box-sizing:border-box;border-radius:4px 0 0 4px;background:#646464;border:1px solid #4e4e4e;border-right:none;box-shadow:inset 1px 1px 0 #727272"></div><div style="left:-49px;top:209.0px;width:120px;height:12px;line-height:12px;text-align:center;font-size:10.5px;color:#101010;transform:rotate(-90deg) scaleX(1.08);white-space:nowrap;-webkit-text-stroke:0.2px #101010">Animation</div><div style="left:2px;top:252px;width:17px;height:48px;box-sizing:border-box;border-radius:4px 0 0 4px;background:#646464;border:1px solid #4e4e4e;border-right:none;box-shadow:inset 1px 1px 0 #727272"></div><div style="left:-49px;top:270.0px;width:120px;height:12px;line-height:12px;text-align:center;font-size:10.5px;color:#101010;transform:rotate(-90deg) scaleX(1.08);white-space:nowrap;-webkit-text-stroke:0.2px #101010">Physics</div><div style="left:2px;top:305px;width:17px;height:79px;box-sizing:border-box;border-radius:4px 0 0 4px;background:#646464;border:1px solid #4e4e4e;border-right:none;box-shadow:inset 1px 1px 0 #727272"></div><div style="left:-49px;top:338.5px;width:120px;height:12px;line-height:12px;text-align:center;font-size:10.5px;color:#101010;transform:rotate(-90deg) scaleX(1.08);white-space:nowrap;-webkit-text-stroke:0.2px #101010">Grease Pencil</div><div style="left:2px;top:389px;width:17px;height:33px;box-sizing:border-box;border-radius:4px 0 0 4px;background:#646464;border:1px solid #4e4e4e;border-right:none;box-shadow:inset 1px 1px 0 #727272"></div><div style="left:-49px;top:399.5px;width:120px;height:12px;line-height:12px;text-align:center;font-size:10.5px;color:#101010;transform:rotate(-90deg) scaleX(1.08);white-space:nowrap;-webkit-text-stroke:0.2px #101010">Misc</div><div style="left:142px;top:32px;width:13px;height:560px;box-sizing:border-box;border-radius:6px;background:#5a5a5a;border:1px solid #4e4e4e"></div><div style="left:142px;top:204px;width:13px;height:387px;box-sizing:border-box;border-radius:6px;background:linear-gradient(90deg,#a6a6a6,#888888);border:1px solid #3c3c3c"></div><div style="left:155px;top:27px;width:4px;height:568px;background:linear-gradient(90deg,#7a7a7a,#6c6c6c);"></div><div style="left:28px;top:27px;width:106px;height:16px;box-sizing:border-box;border-radius:0 0 5px 5px;background:linear-gradient(#464646,#3c3c3c);border:1px solid #1a1a1a;border-top:none"></div><div style="left:36.00px;transform-origin:left;top:28.81px;font-size:10.5px;line-height:10.5px;color:#f2f2f2;white-space:nowrap;transform:scaleX(1.0781);">Set Origin</div><svg style="left:123px;top:27px;width:8px;height:16px" viewBox="0 0 8 16"><path d="M1 7 L4 1 L7 7Z M1 9 L4 15 L7 9Z" fill="#d8d8d8"/></svg><div style="left:36.30px;transform-origin:left;top:53.51px;font-size:10.5px;line-height:10.5px;color:#000;white-space:nowrap;transform:scaleX(1.0722);-webkit-text-stroke:0.2px #000;">Shading:</div><div style="left:28px;top:69px;width:106px;height:19px;box-sizing:border-box;border:1px solid #1e1e1e;border-radius:4px;background:linear-gradient(#a8a8a8,#8a8a8a);"></div><div style="left:36.00px;transform-origin:left;top:73.81px;font-size:10.5px;line-height:10.5px;color:#000;white-space:nowrap;transform:scaleX(1.0771);-webkit-text-stroke:0.2px #000;">Smooth</div><div style="left:80px;top:69px;width:1px;height:19px;background:#1e1e1e;"></div><div style="left:88.50px;transform-origin:left;top:73.81px;font-size:10.5px;line-height:10.5px;color:#000;white-space:nowrap;transform:scaleX(1.0722);-webkit-text-stroke:0.2px #000;">Flat</div><div style="left:36.30px;transform-origin:left;top:98.81px;font-size:10.5px;line-height:10.5px;color:#000;white-space:nowrap;transform:scaleX(1.0698);-webkit-text-stroke:0.2px #000;">Data Transfer:</div><div style="left:28px;top:114px;width:106px;height:19px;box-sizing:border-box;border:1px solid #1e1e1e;border-radius:4px;background:linear-gradient(#a8a8a8,#8a8a8a);"></div><div style="left:36.00px;transform-origin:left;top:118.81px;font-size:10.5px;line-height:10.5px;color:#000;white-space:nowrap;transform:scaleX(1.0875);-webkit-text-stroke:0.2px #000;">Data</div><div style="left:80px;top:114px;width:1px;height:19px;background:#1e1e1e;"></div><div style="left:88.50px;transform-origin:left;top:118.81px;font-size:10.5px;line-height:10.5px;color:#000;white-space:nowrap;transform:scaleX(1.0645);-webkit-text-stroke:0.2px #000;">Data La</div><div style="left:25px;top:141px;width:112px;height:1px;background:#5a5a5a;"></div><div style="left:25px;top:142px;width:112px;height:1px;background:#808080;"></div><svg style="left:33px;top:149.5px;width:8px;height:8px" viewBox="0 0 8 8"><path d="M0 0 L8 0 L4.0 8Z" fill="#222"/></svg><div style="left:45.30px;transform-origin:left;top:146.80px;font-size:11.7px;line-height:11.7px;color:#000;white-space:nowrap;transform:scaleX(1.0946);-webkit-text-stroke:0.2px #000;">History</div><svg style="left:121px;top:152px;width:12px;height:6px" viewBox="0 0 12 6" shape-rendering="crispEdges"><rect x="1" y="1" width="1" height="1" fill="#a8a8a8"/><rect x="0" y="0" width="1" height="1" fill="#1e1e1e"/><rect x="1" y="4" width="1" height="1" fill="#a8a8a8"/><rect x="0" y="3" width="1" height="1" fill="#1e1e1e"/><rect x="4" y="1" width="1" height="1" fill="#a8a8a8"/><rect x="3" y="0" width="1" height="1" fill="#1e1e1e"/><rect x="4" y="4" width="1" height="1" fill="#a8a8a8"/><rect x="3" y="3" width="1" height="1" fill="#1e1e1e"/><rect x="7" y="1" width="1" height="1" fill="#a8a8a8"/><rect x="6" y="0" width="1" height="1" fill="#1e1e1e"/><rect x="7" y="4" width="1" height="1" fill="#a8a8a8"/><rect x="6" y="3" width="1" height="1" fill="#1e1e1e"/><rect x="10" y="1" width="1" height="1" fill="#a8a8a8"/><rect x="9" y="0" width="1" height="1" fill="#1e1e1e"/><rect x="10" y="4" width="1" height="1" fill="#a8a8a8"/><rect x="9" y="3" width="1" height="1" fill="#1e1e1e"/></svg><div style="left:28px;top:174px;width:106px;height:39px;box-sizing:border-box;border-radius:4px;background:#a8a8a8;border:1px solid #1e1e1e;overflow:hidden"><div style="position:absolute;left:0;top:0;width:104px;height:18px;background:linear-gradient(#a8a8a8,#8a8a8a)"></div><div style="position:absolute;left:0;top:18px;width:104px;height:1px;background:#1e1e1e"></div><div style="position:absolute;left:0;top:19px;width:104px;height:19px;background:linear-gradient(#a8a8a8,#8a8a8a)"></div><div style="position:absolute;left:52px;top:0;width:1px;height:18px;background:#1e1e1e"></div></div><div style="left:36.50px;transform-origin:left;top:178.51px;font-size:10.5px;line-height:10.5px;color:#000;white-space:nowrap;transform:scaleX(1.0513);-webkit-text-stroke:0.2px #000;">Undo</div><div style="left:88.50px;transform-origin:left;top:178.51px;font-size:10.5px;line-height:10.5px;color:#000;white-space:nowrap;transform:scaleX(1.0109);-webkit-text-stroke:0.2px #000;">Redo</div><div style="left:36.50px;transform-origin:left;top:198.01px;font-size:10.5px;line-height:10.5px;color:#000;white-space:nowrap;transform:scaleX(1.0799);-webkit-text-stroke:0.2px #000;">Undo History</div><div style="left:36.30px;transform-origin:left;top:224.01px;font-size:10.5px;line-height:10.5px;color:#000;white-space:nowrap;transform:scaleX(1.0595);-webkit-text-stroke:0.2px #000;">Repeat:</div><div style="left:28px;top:239px;width:106px;height:39px;box-sizing:border-box;border-radius:4px;background:#a8a8a8;border:1px solid #1e1e1e;overflow:hidden"><div style="position:absolute;left:0;top:0;width:104px;height:18px;background:linear-gradient(#a8a8a8,#8a8a8a)"></div><div style="position:absolute;left:0;top:18px;width:104px;height:1px;background:#1e1e1e"></div><div style="position:absolute;left:0;top:19px;width:104px;height:19px;background:linear-gradient(#a8a8a8,#8a8a8a)"></div></div><div style="left:36.50px;transform-origin:left;top:243.51px;font-size:10.5px;line-height:10.5px;color:#000;white-space:nowrap;transform:scaleX(1.0564);-webkit-text-stroke:0.2px #000;">Repeat Last</div><div style="left:36.50px;transform-origin:left;top:263.01px;font-size:10.5px;line-height:10.5px;color:#000;white-space:nowrap;transform:scaleX(1.0858);-webkit-text-stroke:0.2px #000;">History...</div><div style="left:0px;top:594px;width:159px;height:1px;background:#5c5c5c;"></div><div style="left:0px;top:595px;width:159px;height:216px;background:#727272;"></div><div style="left:0px;top:595px;width:159px;height:1px;background:#7e7e7e;"></div><div style="left:158px;top:595px;width:1px;height:216px;background:#6a6a6a;"></div><svg style="left:12.5px;top:603px;width:9px;height:8px" viewBox="0 0 9 8"><path d="M0 0 L9 0 L4.5 8Z" fill="#222"/></svg><div style="left:25.00px;transform-origin:left;top:601.30px;font-size:11.7px;line-height:11.7px;color:#000;white-space:nowrap;transform:scaleX(1.0674);-webkit-text-stroke:0.2px #000;">Toggle Editmode</div><svg style="left:137.5px;top:606px;width:12px;height:6px" viewBox="0 0 12 6" shape-rendering="crispEdges"><rect x="1" y="1" width="1" height="1" fill="#a8a8a8"/><rect x="0" y="0" width="1" height="1" fill="#1e1e1e"/><rect x="1" y="4" width="1" height="1" fill="#a8a8a8"/><rect x="0" y="3" width="1" height="1" fill="#1e1e1e"/><rect x="4" y="1" width="1" height="1" fill="#a8a8a8"/><rect x="3" y="0" width="1" height="1" fill="#1e1e1e"/><rect x="4" y="4" width="1" height="1" fill="#a8a8a8"/><rect x="3" y="3" width="1" height="1" fill="#1e1e1e"/><rect x="7" y="1" width="1" height="1" fill="#a8a8a8"/><rect x="6" y="0" width="1" height="1" fill="#1e1e1e"/><rect x="7" y="4" width="1" height="1" fill="#a8a8a8"/><rect x="6" y="3" width="1" height="1" fill="#1e1e1e"/><rect x="10" y="1" width="1" height="1" fill="#a8a8a8"/><rect x="9" y="0" width="1" height="1" fill="#1e1e1e"/><rect x="10" y="4" width="1" height="1" fill="#a8a8a8"/><rect x="9" y="3" width="1" height="1" fill="#1e1e1e"/></svg><div style="left:1434px;top:27px;width:166px;height:784px;background:#727272;"></div><div style="left:1434px;top:27px;width:1px;height:784px;background:#8a8a8a;"></div><div style="left:1434px;top:27px;width:166px;height:1px;background:#7e7e7e;"></div><div style="left:1583px;top:31px;width:13px;height:777px;box-sizing:border-box;border-radius:6px;background:#5c5c5c;border:1px solid #525252"></div><div style="left:1583px;top:31px;width:13px;height:383px;box-sizing:border-box;border-radius:6px;background:linear-gradient(90deg,#8e8e8e,#7a7a7a);border:1px solid #505050"></div><div style="left:1596px;top:27px;width:4px;height:784px;background:linear-gradient(90deg,#6a6a6a,#7a7a7a);"></div><svg style="left:1586px;top:27px;width:14px;height:14px;overflow:visible" viewBox="0 0 14 14"><path d="M2 0 L14 12 M6 0 L14 8 M10 0 L14 4" stroke="#c8c8c8" stroke-width="1"/></svg><svg style="left:1449px;top:36.2px;width:8px;height:8px" viewBox="0 0 8 8"><path d="M0 0 L8 0 L4.0 8Z" fill="#222"/></svg><div style="left:1462.30px;transform-origin:left;top:34.70px;font-size:11.7px;line-height:11.7px;color:#000;white-space:nowrap;transform:scaleX(1.0537);-webkit-text-stroke:0.2px #000;">Transform</div><svg style="left:1560px;top:39.7px;width:12px;height:6px" viewBox="0 0 12 6" shape-rendering="crispEdges"><rect x="1" y="1" width="1" height="1" fill="#a8a8a8"/><rect x="0" y="0" width="1" height="1" fill="#1e1e1e"/><rect x="1" y="4" width="1" height="1" fill="#a8a8a8"/><rect x="0" y="3" width="1" height="1" fill="#1e1e1e"/><rect x="4" y="1" width="1" height="1" fill="#a8a8a8"/><rect x="3" y="0" width="1" height="1" fill="#1e1e1e"/><rect x="4" y="4" width="1" height="1" fill="#a8a8a8"/><rect x="3" y="3" width="1" height="1" fill="#1e1e1e"/><rect x="7" y="1" width="1" height="1" fill="#a8a8a8"/><rect x="6" y="0" width="1" height="1" fill="#1e1e1e"/><rect x="7" y="4" width="1" height="1" fill="#a8a8a8"/><rect x="6" y="3" width="1" height="1" fill="#1e1e1e"/><rect x="10" y="1" width="1" height="1" fill="#a8a8a8"/><rect x="9" y="0" width="1" height="1" fill="#1e1e1e"/><rect x="10" y="4" width="1" height="1" fill="#a8a8a8"/><rect x="9" y="3" width="1" height="1" fill="#1e1e1e"/></svg><div style="left:1451.30px;transform-origin:left;top:68.71px;font-size:10.5px;line-height:10.5px;color:#000;white-space:nowrap;transform:scaleX(1.0825);-webkit-text-stroke:0.2px #000;">Location:</div><div style="left:1443px;top:84px;width:96px;height:64.2px;box-sizing:border-box;border:1px solid #2a2a2a;border-radius:9px;overflow:hidden;background:#b6b6b6"><div style="position:absolute;left:0;top:0px;width:94px;height:20.3px;background:linear-gradient(#a2a2a2,#b6b6b6)"></div><div style="position:absolute;left:0;top:20.3px;width:94px;height:21.7px;background:linear-gradient(#a2a2a2,#b6b6b6)"></div><div style="position:absolute;left:0;top:19.3px;width:94px;height:1.3px;background:#222"></div><div style="position:absolute;left:0;top:42.0px;width:94px;height:22.200000000000003px;background:linear-gradient(#a2a2a2,#b6b6b6)"></div><div style="position:absolute;left:0;top:41.0px;width:94px;height:1.3px;background:#222"></div></div><svg style="left:1449px;top:90.65px;width:5px;height:8px;overflow:visible" viewBox="0 0 5 8"><path d="M4.5 0 L0 4 L4.5 8Z" fill="#808080"/></svg><svg style="left:1529px;top:90.65px;width:5px;height:8px;overflow:visible" viewBox="0 0 5 8"><path d="M0 0 L4.5 4 L0 8Z" fill="#808080"/></svg><div style="left:1459.00px;transform-origin:left;top:89.86px;font-size:10.5px;line-height:10.5px;color:#000;white-space:nowrap;transform:scaleX(1.0404);-webkit-text-stroke:0.2px #000;">X:</div><div style="right:78.50px;transform-origin:right;top:89.86px;font-size:10.5px;line-height:10.5px;color:#000;white-space:nowrap;transform:scaleX(1.1659);-webkit-text-stroke:0.2px #000;">0.00000</div><svg style="left:1449px;top:111.65px;width:5px;height:8px;overflow:visible" viewBox="0 0 5 8"><path d="M4.5 0 L0 4 L4.5 8Z" fill="#808080"/></svg><svg style="left:1529px;top:111.65px;width:5px;height:8px;overflow:visible" viewBox="0 0 5 8"><path d="M0 0 L4.5 4 L0 8Z" fill="#808080"/></svg><div style="left:1459.00px;transform-origin:left;top:110.86px;font-size:10.5px;line-height:10.5px;color:#000;white-space:nowrap;transform:scaleX(0.8811);-webkit-text-stroke:0.2px #000;">Y:</div><div style="right:78.50px;transform-origin:right;top:110.86px;font-size:10.5px;line-height:10.5px;color:#000;white-space:nowrap;transform:scaleX(1.1659);-webkit-text-stroke:0.2px #000;">3.47027</div><svg style="left:1449px;top:133.6px;width:5px;height:8px;overflow:visible" viewBox="0 0 5 8"><path d="M4.5 0 L0 4 L4.5 8Z" fill="#808080"/></svg><svg style="left:1529px;top:133.6px;width:5px;height:8px;overflow:visible" viewBox="0 0 5 8"><path d="M0 0 L4.5 4 L0 8Z" fill="#808080"/></svg><div style="left:1459.00px;transform-origin:left;top:132.81px;font-size:10.5px;line-height:10.5px;color:#000;white-space:nowrap;transform:scaleX(1.1063);-webkit-text-stroke:0.2px #000;">Z:</div><div style="right:78.50px;transform-origin:right;top:132.81px;font-size:10.5px;line-height:10.5px;color:#000;white-space:nowrap;transform:scaleX(1.1659);-webkit-text-stroke:0.2px #000;">0.27089</div><div style="left:1548px;top:84px;width:25px;height:64px;box-sizing:border-box;border:1px solid #2a2a2a;border-radius:4px;overflow:hidden"><div style="position:absolute;left:0;top:0px;width:23px;height:20.3px;background:linear-gradient(#898989,#7f7f7f)"></div><div style="position:absolute;left:0;top:20.3px;width:23px;height:21.7px;background:linear-gradient(#898989,#7f7f7f)"></div><div style="position:absolute;left:0;top:19.3px;width:23px;height:1.3px;background:#222"></div><div style="position:absolute;left:0;top:42.0px;width:23px;height:22.200000000000003px;background:linear-gradient(#898989,#7f7f7f)"></div><div style="position:absolute;left:0;top:41.0px;width:23px;height:1.3px;background:#222"></div></div><svg style="left:1551px;top:85.15px;width:18px;height:17px;overflow:visible" viewBox="0 0 18 17"><path d="M2.5 6.5 V4.5 A3 3 0 0 1 8.5 4.5 V9" fill="none" stroke="#111" stroke-width="2.6"/><path d="M2.5 6.5 V4.5 A3 3 0 0 1 8.5 4.5 V9" fill="none" stroke="#f0f0f0" stroke-width="1.1"/><rect x="5.5" y="8.5" width="11" height="7.5" fill="#e4e4e4" stroke="#111" stroke-width="1"/><rect x="6" y="11" width="10" height="0.9" fill="#b0b0b0"/><rect x="6" y="13.5" width="10" height="0.9" fill="#b0b0b0"/><rect x="10.3" y="11.8" width="1.4" height="1.4" fill="#333"/></svg><svg style="left:1551px;top:106.15px;width:18px;height:17px;overflow:visible" viewBox="0 0 18 17"><path d="M2.5 6.5 V4.5 A3 3 0 0 1 8.5 4.5 V9" fill="none" stroke="#111" stroke-width="2.6"/><path d="M2.5 6.5 V4.5 A3 3 0 0 1 8.5 4.5 V9" fill="none" stroke="#f0f0f0" stroke-width="1.1"/><rect x="5.5" y="8.5" width="11" height="7.5" fill="#e4e4e4" stroke="#111" stroke-width="1"/><rect x="6" y="11" width="10" height="0.9" fill="#b0b0b0"/><rect x="6" y="13.5" width="10" height="0.9" fill="#b0b0b0"/><rect x="10.3" y="11.8" width="1.4" height="1.4" fill="#333"/></svg><svg style="left:1551px;top:128.1px;width:18px;height:17px;overflow:visible" viewBox="0 0 18 17"><path d="M2.5 6.5 V4.5 A3 3 0 0 1 8.5 4.5 V9" fill="none" stroke="#111" stroke-width="2.6"/><path d="M2.5 6.5 V4.5 A3 3 0 0 1 8.5 4.5 V9" fill="none" stroke="#f0f0f0" stroke-width="1.1"/><rect x="5.5" y="8.5" width="11" height="7.5" fill="#e4e4e4" stroke="#111" stroke-width="1"/><rect x="6" y="11" width="10" height="0.9" fill="#b0b0b0"/><rect x="6" y="13.5" width="10" height="0.9" fill="#b0b0b0"/><rect x="10.3" y="11.8" width="1.4" height="1.4" fill="#333"/></svg><div style="left:1451.70px;transform-origin:left;top:156.91px;font-size:10.5px;line-height:10.5px;color:#000;white-space:nowrap;transform:scaleX(1.0862);-webkit-text-stroke:0.2px #000;">Rotation:</div><div style="left:1443px;top:172px;width:96px;height:64.2px;box-sizing:border-box;border:1px solid #2a2a2a;border-radius:9px;overflow:hidden;background:#b6b6b6"><div style="position:absolute;left:0;top:0px;width:94px;height:20.3px;background:linear-gradient(#a2a2a2,#b6b6b6)"></div><div style="position:absolute;left:0;top:20.3px;width:94px;height:21.7px;background:linear-gradient(#a2a2a2,#b6b6b6)"></div><div style="position:absolute;left:0;top:19.3px;width:94px;height:1.3px;background:#222"></div><div style="position:absolute;left:0;top:42.0px;width:94px;height:22.200000000000003px;background:linear-gradient(#a2a2a2,#b6b6b6)"></div><div style="position:absolute;left:0;top:41.0px;width:94px;height:1.3px;background:#222"></div></div><svg style="left:1449px;top:178.65px;width:5px;height:8px;overflow:visible" viewBox="0 0 5 8"><path d="M4.5 0 L0 4 L4.5 8Z" fill="#808080"/></svg><svg style="left:1529px;top:178.65px;width:5px;height:8px;overflow:visible" viewBox="0 0 5 8"><path d="M0 0 L4.5 4 L0 8Z" fill="#808080"/></svg><div style="left:1459.00px;transform-origin:left;top:177.86px;font-size:10.5px;line-height:10.5px;color:#000;white-space:nowrap;transform:scaleX(1.0404);-webkit-text-stroke:0.2px #000;">X:</div><div style="right:78.50px;transform-origin:right;top:177.86px;font-size:10.5px;line-height:10.5px;color:#000;white-space:nowrap;transform:scaleX(1.2113);-webkit-text-stroke:0.2px #000;">0°</div><svg style="left:1449px;top:199.65px;width:5px;height:8px;overflow:visible" viewBox="0 0 5 8"><path d="M4.5 0 L0 4 L4.5 8Z" fill="#808080"/></svg><svg style="left:1529px;top:199.65px;width:5px;height:8px;overflow:visible" viewBox="0 0 5 8"><path d="M0 0 L4.5 4 L0 8Z" fill="#808080"/></svg><div style="left:1459.00px;transform-origin:left;top:198.86px;font-size:10.5px;line-height:10.5px;color:#000;white-space:nowrap;transform:scaleX(0.8811);-webkit-text-stroke:0.2px #000;">Y:</div><div style="right:78.50px;transform-origin:right;top:198.86px;font-size:10.5px;line-height:10.5px;color:#000;white-space:nowrap;transform:scaleX(1.2113);-webkit-text-stroke:0.2px #000;">0°</div><svg style="left:1449px;top:221.6px;width:5px;height:8px;overflow:visible" viewBox="0 0 5 8"><path d="M4.5 0 L0 4 L4.5 8Z" fill="#808080"/></svg><svg style="left:1529px;top:221.6px;width:5px;height:8px;overflow:visible" viewBox="0 0 5 8"><path d="M0 0 L4.5 4 L0 8Z" fill="#808080"/></svg><div style="left:1459.00px;transform-origin:left;top:220.81px;font-size:10.5px;line-height:10.5px;color:#000;white-space:nowrap;transform:scaleX(1.1063);-webkit-text-stroke:0.2px #000;">Z:</div><div style="right:78.50px;transform-origin:right;top:220.81px;font-size:10.5px;line-height:10.5px;color:#000;white-space:nowrap;transform:scaleX(1.2113);-webkit-text-stroke:0.2px #000;">0°</div><div style="left:1548px;top:172px;width:25px;height:64px;box-sizing:border-box;border:1px solid #2a2a2a;border-radius:4px;overflow:hidden"><div style="position:absolute;left:0;top:0px;width:23px;height:20.3px;background:linear-gradient(#898989,#7f7f7f)"></div><div style="position:absolute;left:0;top:20.3px;width:23px;height:21.7px;background:linear-gradient(#898989,#7f7f7f)"></div><div style="position:absolute;left:0;top:19.3px;width:23px;height:1.3px;background:#222"></div><div style="position:absolute;left:0;top:42.0px;width:23px;height:22.200000000000003px;background:linear-gradient(#898989,#7f7f7f)"></div><div style="position:absolute;left:0;top:41.0px;width:23px;height:1.3px;background:#222"></div></div><svg style="left:1551px;top:173.15px;width:18px;height:17px;overflow:visible" viewBox="0 0 18 17"><path d="M2.5 6.5 V4.5 A3 3 0 0 1 8.5 4.5 V9" fill="none" stroke="#111" stroke-width="2.6"/><path d="M2.5 6.5 V4.5 A3 3 0 0 1 8.5 4.5 V9" fill="none" stroke="#f0f0f0" stroke-width="1.1"/><rect x="5.5" y="8.5" width="11" height="7.5" fill="#e4e4e4" stroke="#111" stroke-width="1"/><rect x="6" y="11" width="10" height="0.9" fill="#b0b0b0"/><rect x="6" y="13.5" width="10" height="0.9" fill="#b0b0b0"/><rect x="10.3" y="11.8" width="1.4" height="1.4" fill="#333"/></svg><svg style="left:1551px;top:194.15px;width:18px;height:17px;overflow:visible" viewBox="0 0 18 17"><path d="M2.5 6.5 V4.5 A3 3 0 0 1 8.5 4.5 V9" fill="none" stroke="#111" stroke-width="2.6"/><path d="M2.5 6.5 V4.5 A3 3 0 0 1 8.5 4.5 V9" fill="none" stroke="#f0f0f0" stroke-width="1.1"/><rect x="5.5" y="8.5" width="11" height="7.5" fill="#e4e4e4" stroke="#111" stroke-width="1"/><rect x="6" y="11" width="10" height="0.9" fill="#b0b0b0"/><rect x="6" y="13.5" width="10" height="0.9" fill="#b0b0b0"/><rect x="10.3" y="11.8" width="1.4" height="1.4" fill="#333"/></svg><svg style="left:1551px;top:216.1px;width:18px;height:17px;overflow:visible" viewBox="0 0 18 17"><path d="M2.5 6.5 V4.5 A3 3 0 0 1 8.5 4.5 V9" fill="none" stroke="#111" stroke-width="2.6"/><path d="M2.5 6.5 V4.5 A3 3 0 0 1 8.5 4.5 V9" fill="none" stroke="#f0f0f0" stroke-width="1.1"/><rect x="5.5" y="8.5" width="11" height="7.5" fill="#e4e4e4" stroke="#111" stroke-width="1"/><rect x="6" y="11" width="10" height="0.9" fill="#b0b0b0"/><rect x="6" y="13.5" width="10" height="0.9" fill="#b0b0b0"/><rect x="10.3" y="11.8" width="1.4" height="1.4" fill="#333"/></svg><div style="left:1443px;top:239px;width:130px;height:22px;box-sizing:border-box;border-radius:5px;background:linear-gradient(#555555,#3c3c3c);border:1px solid #1a1a1a"></div><div style="left:1451.50px;transform-origin:left;top:245.51px;font-size:10.5px;line-height:10.5px;color:#f2f2f2;white-space:nowrap;transform:scaleX(1.0277);">XYZ Euler</div><svg style="left:1562px;top:242px;width:8px;height:16px" viewBox="0 0 8 16"><path d="M1 7 L4 1 L7 7Z M1 9 L4 15 L7 9Z" fill="#d8d8d8"/></svg><div style="left:1451.70px;transform-origin:left;top:269.81px;font-size:10.5px;line-height:10.5px;color:#000;white-space:nowrap;transform:scaleX(1.0479);-webkit-text-stroke:0.2px #000;">Scale:</div><div style="left:1443px;top:285px;width:96px;height:64.2px;box-sizing:border-box;border:1px solid #2a2a2a;border-radius:9px;overflow:hidden;background:#b6b6b6"><div style="position:absolute;left:0;top:0px;width:94px;height:20.3px;background:linear-gradient(#a2a2a2,#b6b6b6)"></div><div style="position:absolute;left:0;top:20.3px;width:94px;height:21.7px;background:linear-gradient(#a2a2a2,#b6b6b6)"></div><div style="position:absolute;left:0;top:19.3px;width:94px;height:1.3px;background:#222"></div><div style="position:absolute;left:0;top:42.0px;width:94px;height:22.200000000000003px;background:linear-gradient(#a2a2a2,#b6b6b6)"></div><div style="position:absolute;left:0;top:41.0px;width:94px;height:1.3px;background:#222"></div></div><svg style="left:1449px;top:291.65px;width:5px;height:8px;overflow:visible" viewBox="0 0 5 8"><path d="M4.5 0 L0 4 L4.5 8Z" fill="#808080"/></svg><svg style="left:1529px;top:291.65px;width:5px;height:8px;overflow:visible" viewBox="0 0 5 8"><path d="M0 0 L4.5 4 L0 8Z" fill="#808080"/></svg><div style="left:1459.00px;transform-origin:left;top:290.86px;font-size:10.5px;line-height:10.5px;color:#000;white-space:nowrap;transform:scaleX(1.0404);-webkit-text-stroke:0.2px #000;">X:</div><div style="right:78.50px;transform-origin:right;top:290.86px;font-size:10.5px;line-height:10.5px;color:#000;white-space:nowrap;transform:scaleX(1.1659);-webkit-text-stroke:0.2px #000;">1.224</div><svg style="left:1449px;top:312.65px;width:5px;height:8px;overflow:visible" viewBox="0 0 5 8"><path d="M4.5 0 L0 4 L4.5 8Z" fill="#808080"/></svg><svg style="left:1529px;top:312.65px;width:5px;height:8px;overflow:visible" viewBox="0 0 5 8"><path d="M0 0 L4.5 4 L0 8Z" fill="#808080"/></svg><div style="left:1459.00px;transform-origin:left;top:311.86px;font-size:10.5px;line-height:10.5px;color:#000;white-space:nowrap;transform:scaleX(0.8811);-webkit-text-stroke:0.2px #000;">Y:</div><div style="right:78.50px;transform-origin:right;top:311.86px;font-size:10.5px;line-height:10.5px;color:#000;white-space:nowrap;transform:scaleX(1.1659);-webkit-text-stroke:0.2px #000;">0.020</div><svg style="left:1449px;top:334.6px;width:5px;height:8px;overflow:visible" viewBox="0 0 5 8"><path d="M4.5 0 L0 4 L4.5 8Z" fill="#808080"/></svg><svg style="left:1529px;top:334.6px;width:5px;height:8px;overflow:visible" viewBox="0 0 5 8"><path d="M0 0 L4.5 4 L0 8Z" fill="#808080"/></svg><div style="left:1459.00px;transform-origin:left;top:333.81px;font-size:10.5px;line-height:10.5px;color:#000;white-space:nowrap;transform:scaleX(1.1063);-webkit-text-stroke:0.2px #000;">Z:</div><div style="right:78.50px;transform-origin:right;top:333.81px;font-size:10.5px;line-height:10.5px;color:#000;white-space:nowrap;transform:scaleX(1.1659);-webkit-text-stroke:0.2px #000;">0.350</div><div style="left:1548px;top:285px;width:25px;height:64px;box-sizing:border-box;border:1px solid #2a2a2a;border-radius:4px;overflow:hidden"><div style="position:absolute;left:0;top:0px;width:23px;height:20.3px;background:linear-gradient(#898989,#7f7f7f)"></div><div style="position:absolute;left:0;top:20.3px;width:23px;height:21.7px;background:linear-gradient(#898989,#7f7f7f)"></div><div style="position:absolute;left:0;top:19.3px;width:23px;height:1.3px;background:#222"></div><div style="position:absolute;left:0;top:42.0px;width:23px;height:22.200000000000003px;background:linear-gradient(#898989,#7f7f7f)"></div><div style="position:absolute;left:0;top:41.0px;width:23px;height:1.3px;background:#222"></div></div><svg style="left:1551px;top:286.15px;width:18px;height:17px;overflow:visible" viewBox="0 0 18 17"><path d="M2.5 6.5 V4.5 A3 3 0 0 1 8.5 4.5 V9" fill="none" stroke="#111" stroke-width="2.6"/><path d="M2.5 6.5 V4.5 A3 3 0 0 1 8.5 4.5 V9" fill="none" stroke="#f0f0f0" stroke-width="1.1"/><rect x="5.5" y="8.5" width="11" height="7.5" fill="#e4e4e4" stroke="#111" stroke-width="1"/><rect x="6" y="11" width="10" height="0.9" fill="#b0b0b0"/><rect x="6" y="13.5" width="10" height="0.9" fill="#b0b0b0"/><rect x="10.3" y="11.8" width="1.4" height="1.4" fill="#333"/></svg><svg style="left:1551px;top:307.15px;width:18px;height:17px;overflow:visible" viewBox="0 0 18 17"><path d="M2.5 6.5 V4.5 A3 3 0 0 1 8.5 4.5 V9" fill="none" stroke="#111" stroke-width="2.6"/><path d="M2.5 6.5 V4.5 A3 3 0 0 1 8.5 4.5 V9" fill="none" stroke="#f0f0f0" stroke-width="1.1"/><rect x="5.5" y="8.5" width="11" height="7.5" fill="#e4e4e4" stroke="#111" stroke-width="1"/><rect x="6" y="11" width="10" height="0.9" fill="#b0b0b0"/><rect x="6" y="13.5" width="10" height="0.9" fill="#b0b0b0"/><rect x="10.3" y="11.8" width="1.4" height="1.4" fill="#333"/></svg><svg style="left:1551px;top:329.1px;width:18px;height:17px;overflow:visible" viewBox="0 0 18 17"><path d="M2.5 6.5 V4.5 A3 3 0 0 1 8.5 4.5 V9" fill="none" stroke="#111" stroke-width="2.6"/><path d="M2.5 6.5 V4.5 A3 3 0 0 1 8.5 4.5 V9" fill="none" stroke="#f0f0f0" stroke-width="1.1"/><rect x="5.5" y="8.5" width="11" height="7.5" fill="#e4e4e4" stroke="#111" stroke-width="1"/><rect x="6" y="11" width="10" height="0.9" fill="#b0b0b0"/><rect x="6" y="13.5" width="10" height="0.9" fill="#b0b0b0"/><rect x="10.3" y="11.8" width="1.4" height="1.4" fill="#333"/></svg><div style="left:1451.70px;transform-origin:left;top:358.01px;font-size:10.5px;line-height:10.5px;color:#000;white-space:nowrap;transform:scaleX(1.0794);-webkit-text-stroke:0.2px #000;">Dimensions:</div><div style="left:1443px;top:373.5px;width:130px;height:64.2px;box-sizing:border-box;border:1px solid #2a2a2a;border-radius:9px;overflow:hidden;background:#b6b6b6"><div style="position:absolute;left:0;top:0px;width:128px;height:20.3px;background:linear-gradient(#a2a2a2,#b6b6b6)"></div><div style="position:absolute;left:0;top:20.3px;width:128px;height:21.7px;background:linear-gradient(#a2a2a2,#b6b6b6)"></div><div style="position:absolute;left:0;top:19.3px;width:128px;height:1.3px;background:#222"></div><div style="position:absolute;left:0;top:42.0px;width:128px;height:22.200000000000003px;background:linear-gradient(#a2a2a2,#b6b6b6)"></div><div style="position:absolute;left:0;top:41.0px;width:128px;height:1.3px;background:#222"></div></div><svg style="left:1449px;top:380.15px;width:5px;height:8px;overflow:visible" viewBox="0 0 5 8"><path d="M4.5 0 L0 4 L4.5 8Z" fill="#808080"/></svg><svg style="left:1563px;top:380.15px;width:5px;height:8px;overflow:visible" viewBox="0 0 5 8"><path d="M0 0 L4.5 4 L0 8Z" fill="#808080"/></svg><div style="left:1459.00px;transform-origin:left;top:379.36px;font-size:10.5px;line-height:10.5px;color:#000;white-space:nowrap;transform:scaleX(1.0404);-webkit-text-stroke:0.2px #000;">X:</div><div style="right:44.50px;transform-origin:right;top:379.36px;font-size:10.5px;line-height:10.5px;color:#000;white-space:nowrap;transform:scaleX(1.1659);-webkit-text-stroke:0.2px #000;">2.449</div><svg style="left:1449px;top:401.15px;width:5px;height:8px;overflow:visible" viewBox="0 0 5 8"><path d="M4.5 0 L0 4 L4.5 8Z" fill="#808080"/></svg><svg style="left:1563px;top:401.15px;width:5px;height:8px;overflow:visible" viewBox="0 0 5 8"><path d="M0 0 L4.5 4 L0 8Z" fill="#808080"/></svg><div style="left:1459.00px;transform-origin:left;top:400.36px;font-size:10.5px;line-height:10.5px;color:#000;white-space:nowrap;transform:scaleX(0.8811);-webkit-text-stroke:0.2px #000;">Y:</div><div style="right:44.50px;transform-origin:right;top:400.36px;font-size:10.5px;line-height:10.5px;color:#000;white-space:nowrap;transform:scaleX(1.1659);-webkit-text-stroke:0.2px #000;">0.642</div><svg style="left:1449px;top:423.1px;width:5px;height:8px;overflow:visible" viewBox="0 0 5 8"><path d="M4.5 0 L0 4 L4.5 8Z" fill="#808080"/></svg><svg style="left:1563px;top:423.1px;width:5px;height:8px;overflow:visible" viewBox="0 0 5 8"><path d="M0 0 L4.5 4 L0 8Z" fill="#808080"/></svg><div style="left:1459.00px;transform-origin:left;top:422.31px;font-size:10.5px;line-height:10.5px;color:#000;white-space:nowrap;transform:scaleX(1.1063);-webkit-text-stroke:0.2px #000;">Z:</div><div style="right:44.50px;transform-origin:right;top:422.31px;font-size:10.5px;line-height:10.5px;color:#000;white-space:nowrap;transform:scaleX(1.1659);-webkit-text-stroke:0.2px #000;">0.700</div><div style="left:1440px;top:447px;width:138px;height:1px;background:#5a5a5a;"></div><div style="left:1440px;top:448px;width:138px;height:1px;background:#828282;"></div><svg style="left:1449px;top:456px;width:8px;height:8px" viewBox="0 0 8 8"><path d="M0 0 L8 0 L4.0 8Z" fill="#222"/></svg><div style="left:1461px;top:452px;width:16px;height:16px;box-sizing:border-box;border-radius:4px;background:linear-gradient(#5a5a5a,#3e3e3e);border:1px solid #1a1a1a"></div><svg style="left:1462px;top:449px;width:16px;height:16px;overflow:visible" viewBox="0 0 16 16"><path d="M3 8 L6.5 11.5 L13 3" fill="none" stroke="#111" stroke-width="3.2"/><path d="M3 8 L6.5 11.5 L13 3" fill="none" stroke="#f4f4f4" stroke-width="1.8"/></svg><div style="left:1483.50px;transform-origin:left;top:455.20px;font-size:11.7px;line-height:11.7px;color:#000;white-space:nowrap;transform:scaleX(1.0316);-webkit-text-stroke:0.2px #000;">Grease Pencil</div><svg style="left:1559px;top:460px;width:12px;height:6px" viewBox="0 0 12 6" shape-rendering="crispEdges"><rect x="1" y="1" width="1" height="1" fill="#a8a8a8"/><rect x="0" y="0" width="1" height="1" fill="#1e1e1e"/><rect x="1" y="4" width="1" height="1" fill="#a8a8a8"/><rect x="0" y="3" width="1" height="1" fill="#1e1e1e"/><rect x="4" y="1" width="1" height="1" fill="#a8a8a8"/><rect x="3" y="0" width="1" height="1" fill="#1e1e1e"/><rect x="4" y="4" width="1" height="1" fill="#a8a8a8"/><rect x="3" y="3" width="1" height="1" fill="#1e1e1e"/><rect x="7" y="1" width="1" height="1" fill="#a8a8a8"/><rect x="6" y="0" width="1" height="1" fill="#1e1e1e"/><rect x="7" y="4" width="1" height="1" fill="#a8a8a8"/><rect x="6" y="3" width="1" height="1" fill="#1e1e1e"/><rect x="10" y="1" width="1" height="1" fill="#a8a8a8"/><rect x="9" y="0" width="1" height="1" fill="#1e1e1e"/><rect x="10" y="4" width="1" height="1" fill="#a8a8a8"/><rect x="9" y="3" width="1" height="1" fill="#1e1e1e"/></svg><div style="left:1443px;top:482px;width:130px;height:21px;box-sizing:border-box;border-radius:5px;border:1px solid #1a1a1a;overflow:hidden;background:#444"><div style="position:absolute;left:0;top:0;width:64px;height:19px;background:linear-gradient(#6592d6,#4d7ac0)"></div><div style="position:absolute;left:64px;top:0;width:1px;height:19px;background:#1a1a1a"></div><div style="position:absolute;left:65px;top:0;width:64px;height:19px;background:linear-gradient(#555555,#3c3c3c)"></div></div><div style="left:1325.00px;width:300px;text-align:center;transform-origin:center;top:488.51px;font-size:10.5px;line-height:10.5px;color:#111;white-space:nowrap;transform:scaleX(1.0345);-webkit-text-stroke:0.2px #111;">Scene</div><div style="left:1390.00px;width:300px;text-align:center;transform-origin:center;top:488.51px;font-size:10.5px;line-height:10.5px;color:#f0f0f0;white-space:nowrap;transform:scaleX(1.0842);">Object</div><div style="left:1443px;top:509px;width:130px;height:21px;box-sizing:border-box;border-radius:5px;border:1px solid #1a1a1a;overflow:hidden;background:#a8a8a8"><div style="position:absolute;left:0;top:0;width:34px;height:19px;background:linear-gradient(#505050,#3a3a3a)"></div><div style="position:absolute;left:34px;top:0;width:1px;height:19px;background:#1a1a1a"></div><div style="position:absolute;left:35px;top:0;width:94px;height:19px;background:linear-gradient(#a8a8a8,#8a8a8a)"></div></div><svg style="left:1447px;top:510px;width:16px;height:17px;overflow:visible" viewBox="0 0 16 17"><path d="M1.5 15.5 L2.5 11.5 L11 3 L14 6 L5.5 14.5Z" fill="#8cb838" stroke="#1a1a1a" stroke-width="0.9"/><path d="M4 12.5 L12.2 4.3" stroke="#c8e070" stroke-width="0.9"/><path d="M11 3 L14 6 L15 5 A2 2 0 0 0 12 2Z" fill="#e03030" stroke="#1a1a1a" stroke-width="0.6"/><path d="M1.5 15.5 L2.5 11.5 L5.5 14.5Z" fill="#f0d8a0"/></svg><svg style="left:1467px;top:511.5px;width:8px;height:16px" viewBox="0 0 8 16"><path d="M1 7 L4 1 L7 7Z M1 9 L4 15 L7 9Z" fill="#b8b8b8"/></svg><svg style="left:1482px;top:513px;width:14px;height:14px;overflow:visible" viewBox="0 0 14 14"><path d="M7 1 V13 M1 7 H13" stroke="#4a4a4a" stroke-width="4.2"/><path d="M7 1.8 V12.2 M1.8 7 H12.2" stroke="#ececec" stroke-width="2.2"/></svg><div style="left:1383.00px;width:300px;text-align:center;transform-origin:center;top:515.01px;font-size:10.5px;line-height:10.5px;color:#111;white-space:nowrap;transform:scaleX(1.0489);-webkit-text-stroke:0.2px #111;">New</div><div style="left:1443px;top:536px;width:130px;height:21px;box-sizing:border-box;border:1px solid #1e1e1e;border-radius:5px;background:linear-gradient(#a8a8a8,#8a8a8a);"></div><div style="left:1357.50px;width:300px;text-align:center;transform-origin:center;top:542.01px;font-size:10.5px;line-height:10.5px;color:#111;white-space:nowrap;transform:scaleX(1.0642);-webkit-text-stroke:0.2px #111;">New Layer</div><div style="left:1440px;top:566px;width:138px;height:1px;background:#5a5a5a;"></div><div style="left:1440px;top:567px;width:138px;height:1px;background:#828282;"></div><svg style="left:1449px;top:575.2px;width:8px;height:8px" viewBox="0 0 8 8"><path d="M0 0 L8 0 L4.0 8Z" fill="#222"/></svg><div style="left:1462.60px;transform-origin:left;top:573.70px;font-size:11.7px;line-height:11.7px;color:#000;white-space:nowrap;transform:scaleX(1.0568);-webkit-text-stroke:0.2px #000;">View</div><svg style="left:1560px;top:578.7px;width:12px;height:6px" viewBox="0 0 12 6" shape-rendering="crispEdges"><rect x="1" y="1" width="1" height="1" fill="#a8a8a8"/><rect x="0" y="0" width="1" height="1" fill="#1e1e1e"/><rect x="1" y="4" width="1" height="1" fill="#a8a8a8"/><rect x="0" y="3" width="1" height="1" fill="#1e1e1e"/><rect x="4" y="1" width="1" height="1" fill="#a8a8a8"/><rect x="3" y="0" width="1" height="1" fill="#1e1e1e"/><rect x="4" y="4" width="1" height="1" fill="#a8a8a8"/><rect x="3" y="3" width="1" height="1" fill="#1e1e1e"/><rect x="7" y="1" width="1" height="1" fill="#a8a8a8"/><rect x="6" y="0" width="1" height="1" fill="#1e1e1e"/><rect x="7" y="4" width="1" height="1" fill="#a8a8a8"/><rect x="6" y="3" width="1" height="1" fill="#1e1e1e"/><rect x="10" y="1" width="1" height="1" fill="#a8a8a8"/><rect x="9" y="0" width="1" height="1" fill="#1e1e1e"/><rect x="10" y="4" width="1" height="1" fill="#a8a8a8"/><rect x="9" y="3" width="1" height="1" fill="#1e1e1e"/></svg><div style="left:1443px;top:600.5px;width:130px;height:22px;box-sizing:border-box;border:1px solid #2a2a2a;border-radius:11px;overflow:hidden;background:#b6b6b6"><div style="position:absolute;left:0;top:0px;width:128px;height:22px;background:linear-gradient(#a2a2a2,#b6b6b6)"></div></div><svg style="left:1449px;top:608.0px;width:5px;height:8px;overflow:visible" viewBox="0 0 5 8"><path d="M4.5 0 L0 4 L4.5 8Z" fill="#808080"/></svg><svg style="left:1563px;top:608.0px;width:5px;height:8px;overflow:visible" viewBox="0 0 5 8"><path d="M0 0 L4.5 4 L0 8Z" fill="#808080"/></svg><div style="left:1459.00px;transform-origin:left;top:607.21px;font-size:10.5px;line-height:10.5px;color:#000;white-space:nowrap;transform:scaleX(1.0408);-webkit-text-stroke:0.2px #000;">Lens:</div><div style="right:44.50px;transform-origin:right;top:607.21px;font-size:10.5px;line-height:10.5px;color:#000;white-space:nowrap;transform:scaleX(1.1659);-webkit-text-stroke:0.2px #000;">35.000</div><div style="left:1451.50px;transform-origin:left;top:631.01px;font-size:10.5px;line-height:10.5px;color:#000;white-space:nowrap;transform:scaleX(1.0838);-webkit-text-stroke:0.2px #000;">Lock to Object:</div><div style="left:1443px;top:648.5px;width:130px;height:22px;box-sizing:border-box;border:1px solid #2a2a2a;border-radius:5px;background:linear-gradient(#a0a0a0,#b4b4b4);"></div><svg style="left:1449px;top:652px;width:14px;height:15px;overflow:visible" viewBox="0 0 14 15"><path d="M7 1 L13 4 L13 11 L7 14 L1 11 L1 4Z" fill="#f0a040" stroke="#3a2a10" stroke-width="0.9"/><path d="M1 4 L7 7 L13 4 L7 1Z" fill="#ffd090"/><path d="M7 7 L7 14 L13 11 L13 4Z" fill="#c8701c"/></svg><svg style="left:1554px;top:651px;width:16px;height:16px;overflow:visible" viewBox="0 0 16 16"><path d="M2 14 L9 7" stroke="#111" stroke-width="2.6"/><path d="M2.5 13.5 L9 7" stroke="#ddd" stroke-width="1.2"/><path d="M8 5 L11 8 L13.5 5.5 A2 2 0 0 0 10.5 2.5Z" fill="#111"/></svg><div style="left:1446px;top:675.0px;width:15px;height:15px;box-sizing:border-box;border-radius:4px;background:linear-gradient(#555555,#3c3c3c);border:1px solid #1a1a1a"></div><div style="left:1468.50px;transform-origin:left;top:677.51px;font-size:10.5px;line-height:10.5px;color:#000;white-space:nowrap;transform:scaleX(1.0663);-webkit-text-stroke:0.2px #000;">Lock to Cursor</div><div style="left:1446px;top:702.0px;width:15px;height:15px;box-sizing:border-box;border-radius:4px;background:linear-gradient(#555555,#3c3c3c);border:1px solid #1a1a1a"></div><div style="left:1468.50px;transform-origin:left;top:704.51px;font-size:10.5px;line-height:10.5px;color:#000;white-space:nowrap;transform:scaleX(1.0700);-webkit-text-stroke:0.2px #000;">Lock Camera to Vi...</div><div style="left:1451.50px;transform-origin:left;top:732.31px;font-size:10.5px;line-height:10.5px;color:#000;white-space:nowrap;transform:scaleX(1.0703);-webkit-text-stroke:0.2px #000;">Clip:</div><div style="left:1443px;top:747.5px;width:130px;height:43px;box-sizing:border-box;border:1px solid #2a2a2a;border-radius:9px;overflow:hidden;background:#b6b6b6"><div style="position:absolute;left:0;top:0px;width:128px;height:21px;background:linear-gradient(#a2a2a2,#b6b6b6)"></div><div style="position:absolute;left:0;top:21px;width:128px;height:22px;background:linear-gradient(#a2a2a2,#b6b6b6)"></div><div style="position:absolute;left:0;top:20px;width:128px;height:1.3px;background:#222"></div></div><svg style="left:1449px;top:754.5px;width:5px;height:8px;overflow:visible" viewBox="0 0 5 8"><path d="M4.5 0 L0 4 L4.5 8Z" fill="#808080"/></svg><svg style="left:1563px;top:754.5px;width:5px;height:8px;overflow:visible" viewBox="0 0 5 8"><path d="M0 0 L4.5 4 L0 8Z" fill="#808080"/></svg><div style="left:1459.00px;transform-origin:left;top:753.71px;font-size:10.5px;line-height:10.5px;color:#000;white-space:nowrap;transform:scaleX(1.1191);-webkit-text-stroke:0.2px #000;">Start:</div><div style="right:44.50px;transform-origin:right;top:753.71px;font-size:10.5px;line-height:10.5px;color:#000;white-space:nowrap;transform:scaleX(1.1659);-webkit-text-stroke:0.2px #000;">0.100</div><svg style="left:1449px;top:776.0px;width:5px;height:8px;overflow:visible" viewBox="0 0 5 8"><path d="M4.5 0 L0 4 L4.5 8Z" fill="#808080"/></svg><svg style="left:1563px;top:776.0px;width:5px;height:8px;overflow:visible" viewBox="0 0 5 8"><path d="M0 0 L4.5 4 L0 8Z" fill="#808080"/></svg><div style="left:1459.00px;transform-origin:left;top:775.21px;font-size:10.5px;line-height:10.5px;color:#000;white-space:nowrap;transform:scaleX(1.0463);-webkit-text-stroke:0.2px #000;">End:</div><div style="right:44.50px;transform-origin:right;top:775.21px;font-size:10.5px;line-height:10.5px;color:#000;white-space:nowrap;transform:scaleX(1.1659);-webkit-text-stroke:0.2px #000;">1000.000</div><div style="left:1451.50px;transform-origin:left;top:796.81px;font-size:10.5px;line-height:10.5px;color:#4e4e4e;white-space:nowrap;transform:scaleX(1.0609);">Local Camera:</div><div style="left:0px;top:810px;width:1600px;height:1px;background:#5e5e5e;"></div><div style="left:0px;top:811px;width:1600px;height:26px;background:#686868;"></div><div style="left:0px;top:811px;width:1600px;height:1px;background:#727272;"></div><svg style="left:0px;top:823px;width:14px;height:14px;overflow:visible" viewBox="0 0 14 14"><path d="M0 2 L12 14 M0 6 L8 14 M0 10 L4 14" stroke="#c8c8c8" stroke-width="1"/></svg><div style="left:9px;top:814px;width:30px;height:20px;box-sizing:border-box;border:1px solid #2a2a2a;border-radius:4px;background:linear-gradient(#4d4d4d,#3a3a3a);"></div><svg style="left:13px;top:817px;width:14px;height:14px;overflow:visible" viewBox="0 0 14 14"><path d="M1 3.5 L6 1 L13 2.5 L13 10 L7.5 13 L1 11Z" fill="#d8d8d8" stroke="#111" stroke-width="0.9"/><path d="M1 3.5 L7.5 5.5 L13 2.5" fill="none" stroke="#111" stroke-width="0.8"/><path d="M7.5 5.5 L7.5 13 L13 10 L13 2.5Z" fill="#8a8a8a" stroke="#111" stroke-width="0.8"/></svg><svg style="left:28px;top:816px;width:8px;height:16px" viewBox="0 0 8 16"><path d="M1 7 L4 1 L7 7Z M1 9 L4 15 L7 9Z" fill="#c8c8c8"/></svg><div style="left:51.00px;transform-origin:left;top:820.01px;font-size:10.5px;line-height:10.5px;color:#000;white-space:nowrap;transform:scaleX(1.0621);-webkit-text-stroke:0.2px #000;">View</div><div style="left:96.40px;transform-origin:left;top:820.01px;font-size:10.5px;line-height:10.5px;color:#000;white-space:nowrap;transform:scaleX(1.0679);-webkit-text-stroke:0.2px #000;">Select</div><div style="left:147.00px;transform-origin:left;top:820.01px;font-size:10.5px;line-height:10.5px;color:#000;white-space:nowrap;transform:scaleX(1.0469);-webkit-text-stroke:0.2px #000;">Add</div><div style="left:186.40px;transform-origin:left;top:820.01px;font-size:10.5px;line-height:10.5px;color:#000;white-space:nowrap;transform:scaleX(1.0842);-webkit-text-stroke:0.2px #000;">Object</div><div style="left:233px;top:814px;width:112px;height:20px;box-sizing:border-box;border:1px solid #1e1e1e;border-radius:4px;background:linear-gradient(#505050,#3c3c3c);"></div><svg style="left:238px;top:817px;width:14px;height:15px;overflow:visible" viewBox="0 0 14 15"><path d="M7 1 L13 4 L13 11 L7 14 L1 11 L1 4Z" fill="#f0a040" stroke="#3a2a10" stroke-width="0.9"/><path d="M1 4 L7 7 L13 4 L7 1Z" fill="#ffd090"/><path d="M7 7 L7 14 L13 11 L13 4Z" fill="#c8701c"/></svg><div style="left:256.00px;transform-origin:left;top:820.01px;font-size:10.5px;line-height:10.5px;color:#f0f0f0;white-space:nowrap;transform:scaleX(1.0690);">Object Mode</div><svg style="left:334px;top:816px;width:8px;height:16px" viewBox="0 0 8 16"><path d="M1 7 L4 1 L7 7Z M1 9 L4 15 L7 9Z" fill="#cfcfcf"/></svg><div style="left:351px;top:814px;width:34px;height:20px;box-sizing:border-box;border:1px solid #1e1e1e;border-radius:4px;background:linear-gradient(#505050,#3c3c3c);"></div><svg style="left:354px;top:817px;width:14px;height:14px;overflow:visible" viewBox="0 0 14 14"><defs><radialGradient id="sph" cx="0.4" cy="0.35" r="0.7"><stop offset="0" stop-color="#fff"/><stop offset="0.6" stop-color="#e0e0e0"/><stop offset="1" stop-color="#8a8a8a"/></radialGradient></defs><circle cx="7" cy="7" r="6" fill="url(#sph)" stroke="#222" stroke-width="0.6"/></svg><svg style="left:374px;top:816px;width:8px;height:16px" viewBox="0 0 8 16"><path d="M1 7 L4 1 L7 7Z M1 9 L4 15 L7 9Z" fill="#cfcfcf"/></svg><div style="left:390px;top:814px;width:54px;height:20px;box-sizing:border-box;border-radius:4px;border:1px solid #1e1e1e;overflow:hidden;background:#444"><div style="position:absolute;left:0;top:0;width:35px;height:18px;background:linear-gradient(#505050,#3c3c3c)"></div><div style="position:absolute;left:35px;top:0;width:18px;height:18px;background:linear-gradient(#9a9a9a,#8a8a8a)"></div></div><svg style="left:394px;top:816px;width:15px;height:16px;overflow:visible" viewBox="0 0 15 16"><path d="M1 5 V1 H5 M10 1 H14 V5 M14 11 V15 H10 M5 15 H1 V11" fill="none" stroke="#f0f0f0" stroke-width="1.5"/><rect x="5.5" y="6" width="4" height="4" fill="#3c72d0" stroke="#eee" stroke-width="1"/></svg><svg style="left:415px;top:816px;width:8px;height:16px" viewBox="0 0 8 16"><path d="M1 7 L4 1 L7 7Z M1 9 L4 15 L7 9Z" fill="#b8b8b8"/></svg><svg style="left:426px;top:816px;width:17px;height:16px;overflow:visible" viewBox="0 0 17 16"><circle cx="4" cy="2.5" r="1.5" fill="none" stroke="#2f6ac0" stroke-width="1"/><circle cx="8.5" cy="2.5" r="1.5" fill="none" stroke="#2f6ac0" stroke-width="1"/><circle cx="13" cy="2.5" r="1.5" fill="none" stroke="#2f6ac0" stroke-width="1"/><path d="M2 10 H15 M2 10 L5 7 M2 10 L5 13 M15 10 L12 7 M15 10 L12 13" fill="none" stroke="#111" stroke-width="2.8"/><path d="M2 10 H15 M2 10 L5 7 M2 10 L5 13 M15 10 L12 7 M15 10 L12 13" fill="none" stroke="#f4f4f4" stroke-width="1.2"/></svg><div style="left:451px;top:814px;width:151px;height:20px;box-sizing:border-box;border-radius:4px;border:1px solid #1e1e1e;overflow:hidden;background:#444"><div style="position:absolute;left:0;top:0;width:18px;height:18px;background:linear-gradient(#505050,#3c3c3c)"></div><div style="position:absolute;left:18px;top:0;width:1px;height:18px;background:#1e1e1e"></div><div style="position:absolute;left:19px;top:0;width:19px;height:18px;background:linear-gradient(#6592d6,#4d7ac0)"></div><div style="position:absolute;left:38px;top:0;width:1px;height:18px;background:#1e1e1e"></div><div style="position:absolute;left:39px;top:0;width:19px;height:18px;background:linear-gradient(#505050,#3c3c3c)"></div><div style="position:absolute;left:58px;top:0;width:1px;height:18px;background:#1e1e1e"></div><div style="position:absolute;left:59px;top:0;width:19px;height:18px;background:linear-gradient(#505050,#3c3c3c)"></div><div style="position:absolute;left:78px;top:0;width:1px;height:18px;background:#1e1e1e"></div><div style="position:absolute;left:79px;top:0;width:71px;height:18px;background:linear-gradient(#505050,#3c3c3c)"></div></div><svg style="left:452px;top:816px;width:16px;height:16px;overflow:visible" viewBox="0 0 16 16"><path d="M8 9 V2" stroke="#2f5ad0" stroke-width="2"/><path d="M8 9 L2.5 13" stroke="#d02020" stroke-width="2"/><path d="M8 9 L13.5 13" stroke="#40c020" stroke-width="2"/><circle cx="8" cy="2" r="1.2" fill="#eee"/><circle cx="2.5" cy="13" r="1.2" fill="#eee"/><circle cx="13.5" cy="13" r="1.2" fill="#eee"/></svg><svg style="left:472px;top:816px;width:15px;height:15px;overflow:visible" viewBox="0 0 15 15"><path d="M2 13 L12 3 M6.5 3 H12 V8.5" fill="none" stroke="#111" stroke-width="3"/><path d="M2 13 L12 3 M6.5 3 H12 V8.5" fill="none" stroke="#b8d0f0" stroke-width="1.4"/></svg><svg style="left:492px;top:816px;width:15px;height:15px;overflow:visible" viewBox="0 0 15 15"><path d="M2.5 13.5 A11 11 0 0 1 13 3" fill="none" stroke="#111" stroke-width="3"/><path d="M2.5 13.5 A11 11 0 0 1 13 3" fill="none" stroke="#5f82b8" stroke-width="1.5"/></svg><svg style="left:512px;top:816px;width:15px;height:15px;overflow:visible" viewBox="0 0 15 15"><path d="M2 13 L9 6" stroke="#111" stroke-width="3"/><path d="M2 13 L9 6" stroke="#5f82b8" stroke-width="1.5"/><rect x="8" y="2" width="5.5" height="5.5" fill="#5f82b8" stroke="#111" stroke-width="0.8"/></svg><div style="left:537.00px;transform-origin:left;top:820.01px;font-size:10.5px;line-height:10.5px;color:#f0f0f0;white-space:nowrap;transform:scaleX(1.0617);">Global</div><svg style="left:591px;top:816px;width:8px;height:16px" viewBox="0 0 8 16"><path d="M1 7 L4 1 L7 7Z M1 9 L4 15 L7 9Z" fill="#cfcfcf"/></svg><div style="left:607px;top:814px;width:50px;height:20px;box-sizing:border-box;border-radius:4px;border:1px solid #2a2a2a;overflow:hidden;background:#3a3a3a"><div style="position:absolute;left:0px;top:0px;width:9px;height:9px;background:linear-gradient(#989898,#8c8c8c)"></div><div style="position:absolute;left:10px;top:0px;width:9px;height:9px;background:linear-gradient(#989898,#8c8c8c)"></div><div style="position:absolute;left:20px;top:0px;width:9px;height:9px;background:linear-gradient(#989898,#8c8c8c)"></div><div style="position:absolute;left:30px;top:0px;width:9px;height:9px;background:linear-gradient(#989898,#8c8c8c)"></div><div style="position:absolute;left:40px;top:0px;width:9px;height:9px;background:linear-gradient(#989898,#8c8c8c)"></div><div style="position:absolute;left:0px;top:10px;width:9px;height:9px;background:linear-gradient(#989898,#8c8c8c)"></div><div style="position:absolute;left:10px;top:10px;width:9px;height:9px;background:linear-gradient(#989898,#8c8c8c)"></div><div style="position:absolute;left:20px;top:10px;width:9px;height:9px;background:linear-gradient(#989898,#8c8c8c)"></div><div style="position:absolute;left:30px;top:10px;width:9px;height:9px;background:linear-gradient(#989898,#8c8c8c)"></div><div style="position:absolute;left:40px;top:10px;width:9px;height:9px;background:linear-gradient(#989898,#8c8c8c)"></div></div><svg style="left:610px;top:817px;width:6px;height:6px;overflow:visible" viewBox="0 0 6 6"><rect x="0.5" y="0.5" width="5" height="5" rx="1" fill="#f0a030" stroke="#333" stroke-width="0.8"/></svg><div style="left:662px;top:814px;width:50px;height:20px;box-sizing:border-box;border-radius:4px;border:1px solid #2a2a2a;overflow:hidden;background:#3a3a3a"><div style="position:absolute;left:0px;top:0px;width:9px;height:9px;background:linear-gradient(#989898,#8c8c8c)"></div><div style="position:absolute;left:10px;top:0px;width:9px;height:9px;background:linear-gradient(#989898,#8c8c8c)"></div><div style="position:absolute;left:20px;top:0px;width:9px;height:9px;background:linear-gradient(#989898,#8c8c8c)"></div><div style="position:absolute;left:30px;top:0px;width:9px;height:9px;background:linear-gradient(#989898,#8c8c8c)"></div><div style="position:absolute;left:40px;top:0px;width:9px;height:9px;background:linear-gradient(#989898,#8c8c8c)"></div><div style="position:absolute;left:0px;top:10px;width:9px;height:9px;background:linear-gradient(#989898,#8c8c8c)"></div><div style="position:absolute;left:10px;top:10px;width:9px;height:9px;background:linear-gradient(#989898,#8c8c8c)"></div><div style="position:absolute;left:20px;top:10px;width:9px;height:9px;background:linear-gradient(#989898,#8c8c8c)"></div><div style="position:absolute;left:30px;top:10px;width:9px;height:9px;background:linear-gradient(#989898,#8c8c8c)"></div><div style="position:absolute;left:40px;top:10px;width:9px;height:9px;background:linear-gradient(#989898,#8c8c8c)"></div></div><div style="left:717px;top:814px;width:20px;height:20px;box-sizing:border-box;border:1px solid #1e1e1e;border-radius:4px;background:linear-gradient(#505050,#3c3c3c);"></div><svg style="left:719px;top:816px;width:16px;height:16px;overflow:visible" viewBox="0 0 16 16"><rect x="1.5" y="2" width="9" height="11" fill="#c8c8c8" stroke="#111" stroke-width="0.9"/><path d="M11 7 a2 2 0 0 1 0 4 M11 10 a2 2 0 0 1 0 4" fill="none" stroke="#111" stroke-width="2.2"/><path d="M11 7 a2 2 0 0 1 0 4 M11 10 a2 2 0 0 1 0 4" fill="none" stroke="#eee" stroke-width="1"/></svg><div style="left:742px;top:814px;width:20px;height:20px;box-sizing:border-box;border:1px solid #3a3a3a;border-radius:4px;background:linear-gradient(#8e8e8e,#7e7e7e);"></div><svg style="left:745px;top:817px;width:14px;height:14px;overflow:visible" viewBox="0 0 14 14"><circle cx="7" cy="7" r="5.5" fill="none" stroke="#a8a8a8" stroke-width="1.5"/><circle cx="7" cy="7" r="2.5" fill="none" stroke="#a8a8a8" stroke-width="1.3"/></svg><div style="left:767px;top:814px;width:75px;height:20px;box-sizing:border-box;border-radius:4px;border:1px solid #1e1e1e;overflow:hidden;background:#444"><div style="position:absolute;left:0;top:0;width:19px;height:18px;background:linear-gradient(#8e8e8e,#7e7e7e)"></div><div style="position:absolute;left:19px;top:0;width:35px;height:18px;background:linear-gradient(#444444,#333333)"></div><div style="position:absolute;left:54px;top:0;width:20px;height:18px;background:linear-gradient(#9a9a9a,#8a8a8a)"></div></div><svg style="left:769px;top:816px;width:17px;height:16px;overflow:visible" viewBox="0 0 17 16"><path d="M2.5 10.5 L8 5 A3.4 3.4 0 0 1 12.8 9.8 L7.3 15.3" fill="none" stroke="#5a5a5a" stroke-width="4.2" transform="translate(0,-1.5)"/><path d="M2.5 10.5 L8 5 A3.4 3.4 0 0 1 12.8 9.8 L7.3 15.3" fill="none" stroke="#b8b8b8" stroke-width="2.4" transform="translate(0,-1.5)"/></svg><svg style="left:790px;top:816px;width:16px;height:16px;overflow:visible" viewBox="0 0 16 16"><path d="M1 8 H15 M2 4 V12 M14 4 V12" stroke="#eee" stroke-width="1"/><rect x="6.5" y="3" width="3" height="10" rx="1.3" fill="#3e78d8" stroke="#dfe" stroke-width="0.6"/></svg><svg style="left:812px;top:816px;width:8px;height:16px" viewBox="0 0 8 16"><path d="M1 7 L4 1 L7 7Z M1 9 L4 15 L7 9Z" fill="#bdbdbd"/></svg><svg style="left:823px;top:816px;width:17px;height:16px;overflow:visible" viewBox="0 0 17 16"><path d="M7 4 V15 M12 4 V15 M3 9 H16 M3 13 H16" stroke="#111" stroke-width="2.4"/><path d="M7 4 V15 M12 4 V15 M3 9 H16 M3 13 H16" stroke="#f0f0f0" stroke-width="1"/><circle cx="5" cy="5" r="3.6" fill="#3c72d0" stroke="#eee" stroke-width="1.2"/></svg><div style="left:847px;top:814px;width:40px;height:20px;box-sizing:border-box;border-radius:4px;border:1px solid #1e1e1e;overflow:hidden;background:#444"><div style="position:absolute;left:0;top:0;width:19px;height:18px;background:linear-gradient(#505050,#3c3c3c)"></div><div style="position:absolute;left:19px;top:0;width:1px;height:18px;background:#1e1e1e"></div><div style="position:absolute;left:20px;top:0;width:19px;height:18px;background:linear-gradient(#505050,#3c3c3c)"></div></div><svg style="left:849px;top:816px;width:16px;height:16px;overflow:visible" viewBox="0 0 16 16"><rect x="1" y="5" width="13" height="9" rx="1" fill="#c8c8c8" stroke="#111" stroke-width="0.9"/><circle cx="7.5" cy="9.5" r="3" fill="#6a2a2a" stroke="#111" stroke-width="0.8"/><rect x="3" y="3" width="4" height="2" fill="#ccc" stroke="#111" stroke-width="0.6"/><circle cx="13" cy="3" r="2.5" fill="#f0e060"/></svg><svg style="left:868px;top:816px;width:17px;height:16px;overflow:visible" viewBox="0 0 17 16"><rect x="2" y="7" width="13" height="8" fill="#444" stroke="#111" stroke-width="0.8"/><path d="M1 6 L14 2 L15 5 L2 9Z" fill="#eee" stroke="#111" stroke-width="0.8"/><path d="M4 5 L6 8 M8 4 L10 7 M12 3 L14 6" stroke="#111" stroke-width="1.2"/><rect x="1" y="6" width="3" height="3" fill="#4a7ad0"/></svg>
</body></html>
